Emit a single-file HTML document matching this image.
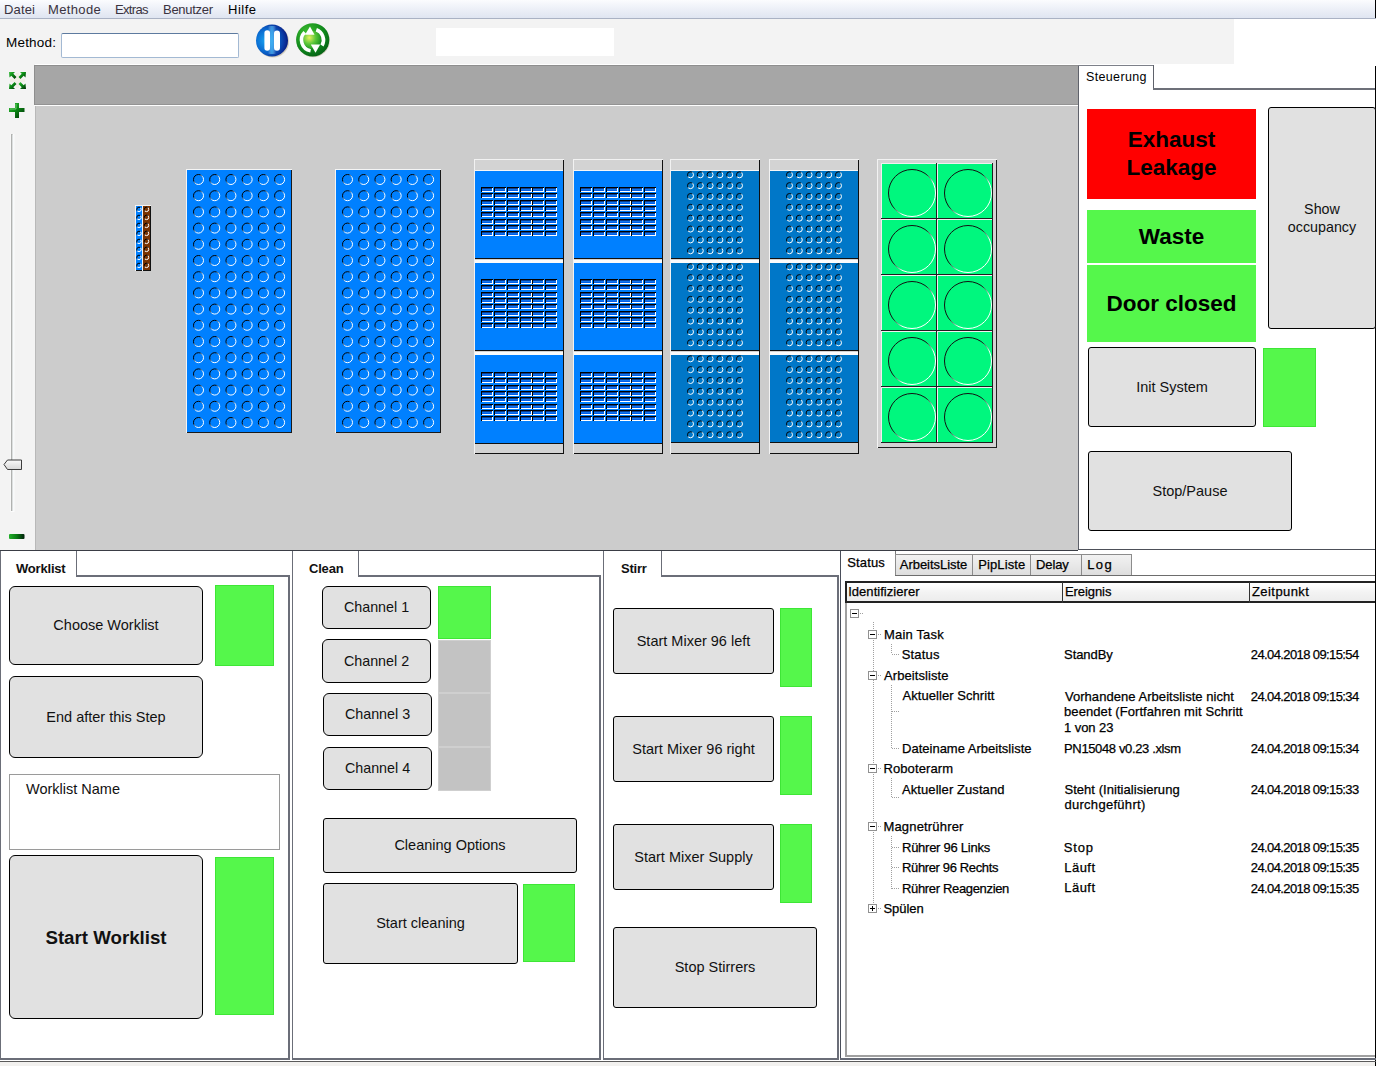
<!DOCTYPE html>
<html><head><meta charset="utf-8">
<style>
*{margin:0;padding:0;box-sizing:border-box}
html,body{width:1376px;height:1066px;overflow:hidden;background:#fff}
body{position:relative;font-family:"Liberation Sans",sans-serif;color:#000}
.a{position:absolute}
.btn{position:absolute;background:#e1e1e1;border:1px solid #000;border-radius:3px;display:flex;align-items:center;justify-content:center;font-size:14px;color:#111;text-align:center;line-height:17px}
.r5{border-radius:6px}
.g{position:absolute;background:#55f74b;border:1px solid #3ee636}
.gr{position:absolute;background:#c3c3c3;border:1px solid #cfcfcf}
.hl{position:absolute;height:1px;background:#6b6e78}
.vl{position:absolute;width:1px;background:#6b6e78}
.menu span{position:absolute;top:2px;font-size:13px;color:#3a3340}
.tt{position:absolute;font-size:12.5px;color:#111;white-space:nowrap}
</style></head><body>

<!-- MENUBAR -->
<div class="a menu" style="left:0;top:0;width:1376px;height:18px;background:linear-gradient(#fbfcfe 0%,#eef1f8 45%,#dfe5f1 100%)">
 <span style="left:4px;letter-spacing:0.15px">Datei</span>
 <span style="left:48px;letter-spacing:0.35px">Methode</span>
 <span style="left:115px;letter-spacing:-0.65px">Extras</span>
 <span style="left:163px;letter-spacing:-0.28px">Benutzer</span>
 <span style="left:228px;color:#000;letter-spacing:0.5px">Hilfe</span>
</div>
<div class="a" style="left:0;top:18px;width:1376px;height:1px;background:#aab2c4"></div>
<div class="a" style="left:1375px;top:0;width:1px;height:18px;background:#000"></div>

<!-- TOOLBAR -->
<div class="a" style="left:0;top:19px;width:1234px;height:45px;background:#f3f3f3"></div>
<div class="a" style="left:6px;top:35px;font-size:13.5px;color:#000;letter-spacing:0.2px">Method:</div>
<div class="a" style="left:61px;top:33px;width:178px;height:25px;background:#fff;border:1px solid #a3b9d3;border-top-color:#5d7a9f;border-radius:2px"></div>
<div class="a" style="left:436px;top:28px;width:178px;height:28px;background:#fff"></div>

<!-- pause icon -->
<svg class="a" style="left:254px;top:22px" width="38" height="38" viewBox="0 0 38 38">
 <defs>
  <radialGradient id="pb" cx="0.32" cy="0.5" r="0.75"><stop offset="0" stop-color="#1aa6f2"/><stop offset="0.45" stop-color="#0a6ad0"/><stop offset="0.8" stop-color="#0a2f98"/><stop offset="1" stop-color="#060d60"/></radialGradient>
  <linearGradient id="pbc" x1="0" y1="0" x2="1" y2="0"><stop offset="0" stop-color="#fff" stop-opacity="0"/><stop offset="0.5" stop-color="#52c8ff" stop-opacity="0.6"/><stop offset="1" stop-color="#fff" stop-opacity="0"/></linearGradient>
 </defs>
 <circle cx="19" cy="19.5" r="16" fill="#b8ae90" opacity="0.55"/>
 <circle cx="18" cy="18.5" r="16" fill="url(#pb)"/>
 <rect x="14" y="4" width="8" height="28" fill="url(#pbc)"/>
 <rect x="10.4" y="8.2" width="5.6" height="20.6" rx="2.8" fill="#fff"/>
 <rect x="20" y="8.6" width="6" height="20.2" rx="3" fill="#fff"/>
</svg>
<!-- refresh icon -->
<svg class="a" style="left:294px;top:21px" width="38" height="38" viewBox="0 0 38 38">
 <defs>
  <radialGradient id="rb" cx="0.35" cy="0.3" r="0.8"><stop offset="0" stop-color="#40c030"/><stop offset="0.6" stop-color="#108a1c"/><stop offset="1" stop-color="#035a14"/></radialGradient>
  <radialGradient id="rc" cx="0.35" cy="0.4" r="0.7"><stop offset="0" stop-color="#e6f060"/><stop offset="0.5" stop-color="#5cc83a"/><stop offset="1" stop-color="#18921c"/></radialGradient>
 </defs>
 <circle cx="19.2" cy="19.6" r="16.6" fill="#b8ae90" opacity="0.55"/>
 <circle cx="18.7" cy="18.8" r="16.6" fill="url(#rb)"/>
 <circle cx="18" cy="18.5" r="9" fill="url(#rc)"/>
 <path d="M10.7 11.2 A11 11 0 0 0 16.6 29.8" stroke="#fff" stroke-width="3.6" fill="none"/>
 <path d="M22.3 8.7 A11 11 0 0 1 28 24.5" stroke="#fff" stroke-width="3.6" fill="none"/>
 <path d="M16 5.5 L11 13.8 L20.5 13.8 Z" fill="#fff"/>
 <path d="M21.5 31.8 L16.8 23.6 L26.2 23.6 Z" fill="#fff"/>
</svg>

<!-- LEFT ZOOM STRIP -->
<div class="a" style="left:0;top:64px;width:35px;height:486px;background:#f3f3f3"></div>
<svg class="a" style="left:0;top:64px" width="34" height="486" viewBox="0 64 34 486">
 <defs>
  <linearGradient id="gp" x1="0" y1="0" x2="1" y2="1"><stop offset="0" stop-color="#3cc040"/><stop offset="0.45" stop-color="#0a8a14"/><stop offset="1" stop-color="#002a06"/></linearGradient>
  <linearGradient id="gm" x1="0" y1="0" x2="1" y2="0"><stop offset="0" stop-color="#22b02a"/><stop offset="0.5" stop-color="#0a7a14"/><stop offset="1" stop-color="#00200a"/></linearGradient>
 </defs>
 <g fill="#efeadb" opacity="0.55"><rect x="16" y="73" width="3" height="15"/><rect x="10" y="79" width="15" height="3"/><circle cx="17.5" cy="80.5" r="3"/></g>
 <g fill="url(#gp)" stroke="#fff" stroke-width="0.6" stroke-opacity="0.7" paint-order="stroke">
  <path d="M9 72 H15 L13.3 73.8 L16.5 77 L14.5 79 L11.3 75.8 L9.5 77.6 Z"/>
  <path d="M26 72 H20 L21.7 73.8 L18.5 77 L20.5 79 L23.7 75.8 L25.5 77.6 Z"/>
  <path d="M9 89 H15 L13.3 87.2 L16.5 84 L14.5 82 L11.3 85.2 L9.5 83.4 Z"/>
  <path d="M26 89 H20 L21.7 87.2 L18.5 84 L20.5 82 L23.7 85.2 L25.5 83.4 Z"/>
 </g>
 <path d="M15 103 H19 V108 H24.5 V112 H19 V118 H15 V112 H9 V108 H15 Z" fill="url(#gp)"/>
 <path d="M16 104 V109 H10" stroke="#9be89a" stroke-width="0.8" fill="none" opacity="0.8"/>
 <rect x="10.5" y="134" width="4" height="378" fill="#fff" opacity="0.7"/>
 <rect x="11" y="134" width="1.6" height="377" fill="#b0b2b0"/>
 <rect x="12.6" y="135" width="1" height="376" fill="#f4f8fa"/>
 <defs><linearGradient id="gt" x1="0" y1="0" x2="0" y2="1"><stop offset="0" stop-color="#fafafa"/><stop offset="1" stop-color="#d8d8d8"/></linearGradient></defs>
 <path d="M4 464.5 L7.5 460 H21.5 V469.5 H7.5 Z" fill="url(#gt)" stroke="#3c3c3c" stroke-width="1"/>
 <rect x="9" y="534" width="15.5" height="5" rx="1" fill="url(#gm)"/>
</svg>

<!-- DECK -->
<div class="a" style="left:34px;top:65px;width:1044px;height:40px;background:#a6a6a6;border-top:1px solid #8e8e8e;border-left:1px solid #8e8e8e"></div>
<div class="a" style="left:35px;top:104px;width:1043px;height:1px;background:#939393"></div>
<div class="a" style="left:34px;top:105px;width:1044px;height:1px;background:#fdfdfd"></div>
<div class="a" style="left:35px;top:106px;width:1043px;height:444px;background:#cccccc;border-left:1px solid #b8b8b8"></div>
<svg width="0" height="0" style="position:absolute"><defs>
<linearGradient id="wellg" x1="0" y1="0" x2="1" y2="1"><stop offset="0.3" stop-color="#000"/><stop offset="0.6" stop-color="#fff"/></linearGradient>
<linearGradient id="wellg2" x1="0" y1="0" x2="1" y2="1"><stop offset="0.35" stop-color="#000"/><stop offset="0.55" stop-color="#fff"/></linearGradient>
<linearGradient id="resg" x1="0" y1="0" x2="1" y2="1"><stop offset="0.45" stop-color="#111"/><stop offset="0.62" stop-color="#fff"/></linearGradient>
<linearGradient id="tubeg" x1="0" y1="0" x2="0" y2="1"><stop offset="0" stop-color="#1e9bff"/><stop offset="1" stop-color="#0050e0"/></linearGradient>
</defs></svg><svg class="a" style="left:135px;top:205px" width="8" height="66"><rect x="0" y="0" width="8" height="66" fill="#f4f4f4"/><rect x="1" y="1" width="7" height="65" fill="#111"/><rect x="1" y="1" width="6" height="64" fill="#0080ff"/><g fill="none" stroke="url(#wellg2)" stroke-width="1"><circle cx="4" cy="4.4" r="2.2"/><circle cx="4" cy="12.4" r="2.2"/><circle cx="4" cy="20.4" r="2.2"/><circle cx="4" cy="28.4" r="2.2"/><circle cx="4" cy="36.4" r="2.2"/><circle cx="4" cy="44.4" r="2.2"/><circle cx="4" cy="52.4" r="2.2"/><circle cx="4" cy="60.4" r="2.2"/></g></svg><svg class="a" style="left:142px;top:205px" width="9" height="66"><rect x="0" y="0" width="9" height="66" fill="#f4f4f4"/><rect x="1" y="1" width="8" height="65" fill="#111"/><rect x="1" y="1" width="7" height="64" fill="#7a3300"/><g fill="none" stroke="url(#wellg2)" stroke-width="1"><circle cx="4.5" cy="4.4" r="2.2"/><circle cx="4.5" cy="12.4" r="2.2"/><circle cx="4.5" cy="20.4" r="2.2"/><circle cx="4.5" cy="28.4" r="2.2"/><circle cx="4.5" cy="36.4" r="2.2"/><circle cx="4.5" cy="44.4" r="2.2"/><circle cx="4.5" cy="52.4" r="2.2"/><circle cx="4.5" cy="60.4" r="2.2"/></g></svg><svg class="a" style="left:186px;top:169px" width="106" height="264"><rect x="0" y="0" width="106" height="264" fill="#f4f4f4"/><rect x="1" y="1" width="105" height="263" fill="#1a1a1a"/><rect x="1" y="1" width="104" height="262" fill="#0080ff"/><g fill="none" stroke="url(#wellg)" stroke-width="1"><circle cx="12.5" cy="10.5" r="5"/><circle cx="28.72" cy="10.5" r="5"/><circle cx="44.94" cy="10.5" r="5"/><circle cx="61.16" cy="10.5" r="5"/><circle cx="77.38" cy="10.5" r="5"/><circle cx="93.6" cy="10.5" r="5"/><circle cx="12.5" cy="26.7" r="5"/><circle cx="28.72" cy="26.7" r="5"/><circle cx="44.94" cy="26.7" r="5"/><circle cx="61.16" cy="26.7" r="5"/><circle cx="77.38" cy="26.7" r="5"/><circle cx="93.6" cy="26.7" r="5"/><circle cx="12.5" cy="42.9" r="5"/><circle cx="28.72" cy="42.9" r="5"/><circle cx="44.94" cy="42.9" r="5"/><circle cx="61.16" cy="42.9" r="5"/><circle cx="77.38" cy="42.9" r="5"/><circle cx="93.6" cy="42.9" r="5"/><circle cx="12.5" cy="59.1" r="5"/><circle cx="28.72" cy="59.1" r="5"/><circle cx="44.94" cy="59.1" r="5"/><circle cx="61.16" cy="59.1" r="5"/><circle cx="77.38" cy="59.1" r="5"/><circle cx="93.6" cy="59.1" r="5"/><circle cx="12.5" cy="75.3" r="5"/><circle cx="28.72" cy="75.3" r="5"/><circle cx="44.94" cy="75.3" r="5"/><circle cx="61.16" cy="75.3" r="5"/><circle cx="77.38" cy="75.3" r="5"/><circle cx="93.6" cy="75.3" r="5"/><circle cx="12.5" cy="91.5" r="5"/><circle cx="28.72" cy="91.5" r="5"/><circle cx="44.94" cy="91.5" r="5"/><circle cx="61.16" cy="91.5" r="5"/><circle cx="77.38" cy="91.5" r="5"/><circle cx="93.6" cy="91.5" r="5"/><circle cx="12.5" cy="107.7" r="5"/><circle cx="28.72" cy="107.7" r="5"/><circle cx="44.94" cy="107.7" r="5"/><circle cx="61.16" cy="107.7" r="5"/><circle cx="77.38" cy="107.7" r="5"/><circle cx="93.6" cy="107.7" r="5"/><circle cx="12.5" cy="123.9" r="5"/><circle cx="28.72" cy="123.9" r="5"/><circle cx="44.94" cy="123.9" r="5"/><circle cx="61.16" cy="123.9" r="5"/><circle cx="77.38" cy="123.9" r="5"/><circle cx="93.6" cy="123.9" r="5"/><circle cx="12.5" cy="140.1" r="5"/><circle cx="28.72" cy="140.1" r="5"/><circle cx="44.94" cy="140.1" r="5"/><circle cx="61.16" cy="140.1" r="5"/><circle cx="77.38" cy="140.1" r="5"/><circle cx="93.6" cy="140.1" r="5"/><circle cx="12.5" cy="156.3" r="5"/><circle cx="28.72" cy="156.3" r="5"/><circle cx="44.94" cy="156.3" r="5"/><circle cx="61.16" cy="156.3" r="5"/><circle cx="77.38" cy="156.3" r="5"/><circle cx="93.6" cy="156.3" r="5"/><circle cx="12.5" cy="172.5" r="5"/><circle cx="28.72" cy="172.5" r="5"/><circle cx="44.94" cy="172.5" r="5"/><circle cx="61.16" cy="172.5" r="5"/><circle cx="77.38" cy="172.5" r="5"/><circle cx="93.6" cy="172.5" r="5"/><circle cx="12.5" cy="188.7" r="5"/><circle cx="28.72" cy="188.7" r="5"/><circle cx="44.94" cy="188.7" r="5"/><circle cx="61.16" cy="188.7" r="5"/><circle cx="77.38" cy="188.7" r="5"/><circle cx="93.6" cy="188.7" r="5"/><circle cx="12.5" cy="204.9" r="5"/><circle cx="28.72" cy="204.9" r="5"/><circle cx="44.94" cy="204.9" r="5"/><circle cx="61.16" cy="204.9" r="5"/><circle cx="77.38" cy="204.9" r="5"/><circle cx="93.6" cy="204.9" r="5"/><circle cx="12.5" cy="221.1" r="5"/><circle cx="28.72" cy="221.1" r="5"/><circle cx="44.94" cy="221.1" r="5"/><circle cx="61.16" cy="221.1" r="5"/><circle cx="77.38" cy="221.1" r="5"/><circle cx="93.6" cy="221.1" r="5"/><circle cx="12.5" cy="237.3" r="5"/><circle cx="28.72" cy="237.3" r="5"/><circle cx="44.94" cy="237.3" r="5"/><circle cx="61.16" cy="237.3" r="5"/><circle cx="77.38" cy="237.3" r="5"/><circle cx="93.6" cy="237.3" r="5"/><circle cx="12.5" cy="253.5" r="5"/><circle cx="28.72" cy="253.5" r="5"/><circle cx="44.94" cy="253.5" r="5"/><circle cx="61.16" cy="253.5" r="5"/><circle cx="77.38" cy="253.5" r="5"/><circle cx="93.6" cy="253.5" r="5"/></g></svg><svg class="a" style="left:335px;top:169px" width="106" height="264"><rect x="0" y="0" width="106" height="264" fill="#f4f4f4"/><rect x="1" y="1" width="105" height="263" fill="#1a1a1a"/><rect x="1" y="1" width="104" height="262" fill="#0080ff"/><g fill="none" stroke="url(#wellg)" stroke-width="1"><circle cx="12.5" cy="10.5" r="5"/><circle cx="28.72" cy="10.5" r="5"/><circle cx="44.94" cy="10.5" r="5"/><circle cx="61.16" cy="10.5" r="5"/><circle cx="77.38" cy="10.5" r="5"/><circle cx="93.6" cy="10.5" r="5"/><circle cx="12.5" cy="26.7" r="5"/><circle cx="28.72" cy="26.7" r="5"/><circle cx="44.94" cy="26.7" r="5"/><circle cx="61.16" cy="26.7" r="5"/><circle cx="77.38" cy="26.7" r="5"/><circle cx="93.6" cy="26.7" r="5"/><circle cx="12.5" cy="42.9" r="5"/><circle cx="28.72" cy="42.9" r="5"/><circle cx="44.94" cy="42.9" r="5"/><circle cx="61.16" cy="42.9" r="5"/><circle cx="77.38" cy="42.9" r="5"/><circle cx="93.6" cy="42.9" r="5"/><circle cx="12.5" cy="59.1" r="5"/><circle cx="28.72" cy="59.1" r="5"/><circle cx="44.94" cy="59.1" r="5"/><circle cx="61.16" cy="59.1" r="5"/><circle cx="77.38" cy="59.1" r="5"/><circle cx="93.6" cy="59.1" r="5"/><circle cx="12.5" cy="75.3" r="5"/><circle cx="28.72" cy="75.3" r="5"/><circle cx="44.94" cy="75.3" r="5"/><circle cx="61.16" cy="75.3" r="5"/><circle cx="77.38" cy="75.3" r="5"/><circle cx="93.6" cy="75.3" r="5"/><circle cx="12.5" cy="91.5" r="5"/><circle cx="28.72" cy="91.5" r="5"/><circle cx="44.94" cy="91.5" r="5"/><circle cx="61.16" cy="91.5" r="5"/><circle cx="77.38" cy="91.5" r="5"/><circle cx="93.6" cy="91.5" r="5"/><circle cx="12.5" cy="107.7" r="5"/><circle cx="28.72" cy="107.7" r="5"/><circle cx="44.94" cy="107.7" r="5"/><circle cx="61.16" cy="107.7" r="5"/><circle cx="77.38" cy="107.7" r="5"/><circle cx="93.6" cy="107.7" r="5"/><circle cx="12.5" cy="123.9" r="5"/><circle cx="28.72" cy="123.9" r="5"/><circle cx="44.94" cy="123.9" r="5"/><circle cx="61.16" cy="123.9" r="5"/><circle cx="77.38" cy="123.9" r="5"/><circle cx="93.6" cy="123.9" r="5"/><circle cx="12.5" cy="140.1" r="5"/><circle cx="28.72" cy="140.1" r="5"/><circle cx="44.94" cy="140.1" r="5"/><circle cx="61.16" cy="140.1" r="5"/><circle cx="77.38" cy="140.1" r="5"/><circle cx="93.6" cy="140.1" r="5"/><circle cx="12.5" cy="156.3" r="5"/><circle cx="28.72" cy="156.3" r="5"/><circle cx="44.94" cy="156.3" r="5"/><circle cx="61.16" cy="156.3" r="5"/><circle cx="77.38" cy="156.3" r="5"/><circle cx="93.6" cy="156.3" r="5"/><circle cx="12.5" cy="172.5" r="5"/><circle cx="28.72" cy="172.5" r="5"/><circle cx="44.94" cy="172.5" r="5"/><circle cx="61.16" cy="172.5" r="5"/><circle cx="77.38" cy="172.5" r="5"/><circle cx="93.6" cy="172.5" r="5"/><circle cx="12.5" cy="188.7" r="5"/><circle cx="28.72" cy="188.7" r="5"/><circle cx="44.94" cy="188.7" r="5"/><circle cx="61.16" cy="188.7" r="5"/><circle cx="77.38" cy="188.7" r="5"/><circle cx="93.6" cy="188.7" r="5"/><circle cx="12.5" cy="204.9" r="5"/><circle cx="28.72" cy="204.9" r="5"/><circle cx="44.94" cy="204.9" r="5"/><circle cx="61.16" cy="204.9" r="5"/><circle cx="77.38" cy="204.9" r="5"/><circle cx="93.6" cy="204.9" r="5"/><circle cx="12.5" cy="221.1" r="5"/><circle cx="28.72" cy="221.1" r="5"/><circle cx="44.94" cy="221.1" r="5"/><circle cx="61.16" cy="221.1" r="5"/><circle cx="77.38" cy="221.1" r="5"/><circle cx="93.6" cy="221.1" r="5"/><circle cx="12.5" cy="237.3" r="5"/><circle cx="28.72" cy="237.3" r="5"/><circle cx="44.94" cy="237.3" r="5"/><circle cx="61.16" cy="237.3" r="5"/><circle cx="77.38" cy="237.3" r="5"/><circle cx="93.6" cy="237.3" r="5"/><circle cx="12.5" cy="253.5" r="5"/><circle cx="28.72" cy="253.5" r="5"/><circle cx="44.94" cy="253.5" r="5"/><circle cx="61.16" cy="253.5" r="5"/><circle cx="77.38" cy="253.5" r="5"/><circle cx="93.6" cy="253.5" r="5"/></g></svg><svg class="a" style="left:474px;top:159px" width="90" height="295"><rect x="0" y="0" width="90" height="295" fill="#f2f2f2"/><rect x="1" y="1" width="89" height="294" fill="#101010"/><rect x="1" y="1" width="88" height="293" fill="#d3d3d3"/><rect x="1" y="11" width="88" height="1" fill="#f6f6f6"/><rect x="1" y="12" width="89" height="88" fill="#101010"/><rect x="1" y="12" width="88" height="87" fill="#0080ff"/><rect x="7" y="28" width="12" height="5" fill="#000"/><rect x="8" y="29" width="11" height="4" fill="#fff"/><rect x="8" y="29" width="10" height="3" fill="url(#tubeg)"/><rect x="8" y="29" width="10" height="1" fill="#0a3c90"/><rect x="20" y="28" width="12" height="5" fill="#000"/><rect x="21" y="29" width="11" height="4" fill="#fff"/><rect x="21" y="29" width="10" height="3" fill="url(#tubeg)"/><rect x="21" y="29" width="10" height="1" fill="#0a3c90"/><rect x="33" y="28" width="12" height="5" fill="#000"/><rect x="34" y="29" width="11" height="4" fill="#fff"/><rect x="34" y="29" width="10" height="3" fill="url(#tubeg)"/><rect x="34" y="29" width="10" height="1" fill="#0a3c90"/><rect x="46" y="28" width="12" height="5" fill="#000"/><rect x="47" y="29" width="11" height="4" fill="#fff"/><rect x="47" y="29" width="10" height="3" fill="url(#tubeg)"/><rect x="47" y="29" width="10" height="1" fill="#0a3c90"/><rect x="58" y="28" width="12" height="5" fill="#000"/><rect x="59" y="29" width="11" height="4" fill="#fff"/><rect x="59" y="29" width="10" height="3" fill="url(#tubeg)"/><rect x="59" y="29" width="10" height="1" fill="#0a3c90"/><rect x="71" y="28" width="12" height="5" fill="#000"/><rect x="72" y="29" width="11" height="4" fill="#fff"/><rect x="72" y="29" width="10" height="3" fill="url(#tubeg)"/><rect x="72" y="29" width="10" height="1" fill="#0a3c90"/><rect x="7" y="34" width="12" height="5" fill="#000"/><rect x="8" y="35" width="11" height="4" fill="#fff"/><rect x="8" y="35" width="10" height="3" fill="url(#tubeg)"/><rect x="8" y="35" width="10" height="1" fill="#0a3c90"/><rect x="20" y="34" width="12" height="5" fill="#000"/><rect x="21" y="35" width="11" height="4" fill="#fff"/><rect x="21" y="35" width="10" height="3" fill="url(#tubeg)"/><rect x="21" y="35" width="10" height="1" fill="#0a3c90"/><rect x="33" y="34" width="12" height="5" fill="#000"/><rect x="34" y="35" width="11" height="4" fill="#fff"/><rect x="34" y="35" width="10" height="3" fill="url(#tubeg)"/><rect x="34" y="35" width="10" height="1" fill="#0a3c90"/><rect x="46" y="34" width="12" height="5" fill="#000"/><rect x="47" y="35" width="11" height="4" fill="#fff"/><rect x="47" y="35" width="10" height="3" fill="url(#tubeg)"/><rect x="47" y="35" width="10" height="1" fill="#0a3c90"/><rect x="58" y="34" width="12" height="5" fill="#000"/><rect x="59" y="35" width="11" height="4" fill="#fff"/><rect x="59" y="35" width="10" height="3" fill="url(#tubeg)"/><rect x="59" y="35" width="10" height="1" fill="#0a3c90"/><rect x="71" y="34" width="12" height="5" fill="#000"/><rect x="72" y="35" width="11" height="4" fill="#fff"/><rect x="72" y="35" width="10" height="3" fill="url(#tubeg)"/><rect x="72" y="35" width="10" height="1" fill="#0a3c90"/><rect x="7" y="41" width="12" height="5" fill="#000"/><rect x="8" y="42" width="11" height="4" fill="#fff"/><rect x="8" y="42" width="10" height="3" fill="url(#tubeg)"/><rect x="8" y="42" width="10" height="1" fill="#0a3c90"/><rect x="20" y="41" width="12" height="5" fill="#000"/><rect x="21" y="42" width="11" height="4" fill="#fff"/><rect x="21" y="42" width="10" height="3" fill="url(#tubeg)"/><rect x="21" y="42" width="10" height="1" fill="#0a3c90"/><rect x="33" y="41" width="12" height="5" fill="#000"/><rect x="34" y="42" width="11" height="4" fill="#fff"/><rect x="34" y="42" width="10" height="3" fill="url(#tubeg)"/><rect x="34" y="42" width="10" height="1" fill="#0a3c90"/><rect x="46" y="41" width="12" height="5" fill="#000"/><rect x="47" y="42" width="11" height="4" fill="#fff"/><rect x="47" y="42" width="10" height="3" fill="url(#tubeg)"/><rect x="47" y="42" width="10" height="1" fill="#0a3c90"/><rect x="58" y="41" width="12" height="5" fill="#000"/><rect x="59" y="42" width="11" height="4" fill="#fff"/><rect x="59" y="42" width="10" height="3" fill="url(#tubeg)"/><rect x="59" y="42" width="10" height="1" fill="#0a3c90"/><rect x="71" y="41" width="12" height="5" fill="#000"/><rect x="72" y="42" width="11" height="4" fill="#fff"/><rect x="72" y="42" width="10" height="3" fill="url(#tubeg)"/><rect x="72" y="42" width="10" height="1" fill="#0a3c90"/><rect x="7" y="47" width="12" height="5" fill="#000"/><rect x="8" y="48" width="11" height="4" fill="#fff"/><rect x="8" y="48" width="10" height="3" fill="url(#tubeg)"/><rect x="8" y="48" width="10" height="1" fill="#0a3c90"/><rect x="20" y="47" width="12" height="5" fill="#000"/><rect x="21" y="48" width="11" height="4" fill="#fff"/><rect x="21" y="48" width="10" height="3" fill="url(#tubeg)"/><rect x="21" y="48" width="10" height="1" fill="#0a3c90"/><rect x="33" y="47" width="12" height="5" fill="#000"/><rect x="34" y="48" width="11" height="4" fill="#fff"/><rect x="34" y="48" width="10" height="3" fill="url(#tubeg)"/><rect x="34" y="48" width="10" height="1" fill="#0a3c90"/><rect x="46" y="47" width="12" height="5" fill="#000"/><rect x="47" y="48" width="11" height="4" fill="#fff"/><rect x="47" y="48" width="10" height="3" fill="url(#tubeg)"/><rect x="47" y="48" width="10" height="1" fill="#0a3c90"/><rect x="58" y="47" width="12" height="5" fill="#000"/><rect x="59" y="48" width="11" height="4" fill="#fff"/><rect x="59" y="48" width="10" height="3" fill="url(#tubeg)"/><rect x="59" y="48" width="10" height="1" fill="#0a3c90"/><rect x="71" y="47" width="12" height="5" fill="#000"/><rect x="72" y="48" width="11" height="4" fill="#fff"/><rect x="72" y="48" width="10" height="3" fill="url(#tubeg)"/><rect x="72" y="48" width="10" height="1" fill="#0a3c90"/><rect x="7" y="53" width="12" height="5" fill="#000"/><rect x="8" y="54" width="11" height="4" fill="#fff"/><rect x="8" y="54" width="10" height="3" fill="url(#tubeg)"/><rect x="8" y="54" width="10" height="1" fill="#0a3c90"/><rect x="20" y="53" width="12" height="5" fill="#000"/><rect x="21" y="54" width="11" height="4" fill="#fff"/><rect x="21" y="54" width="10" height="3" fill="url(#tubeg)"/><rect x="21" y="54" width="10" height="1" fill="#0a3c90"/><rect x="33" y="53" width="12" height="5" fill="#000"/><rect x="34" y="54" width="11" height="4" fill="#fff"/><rect x="34" y="54" width="10" height="3" fill="url(#tubeg)"/><rect x="34" y="54" width="10" height="1" fill="#0a3c90"/><rect x="46" y="53" width="12" height="5" fill="#000"/><rect x="47" y="54" width="11" height="4" fill="#fff"/><rect x="47" y="54" width="10" height="3" fill="url(#tubeg)"/><rect x="47" y="54" width="10" height="1" fill="#0a3c90"/><rect x="58" y="53" width="12" height="5" fill="#000"/><rect x="59" y="54" width="11" height="4" fill="#fff"/><rect x="59" y="54" width="10" height="3" fill="url(#tubeg)"/><rect x="59" y="54" width="10" height="1" fill="#0a3c90"/><rect x="71" y="53" width="12" height="5" fill="#000"/><rect x="72" y="54" width="11" height="4" fill="#fff"/><rect x="72" y="54" width="10" height="3" fill="url(#tubeg)"/><rect x="72" y="54" width="10" height="1" fill="#0a3c90"/><rect x="7" y="60" width="12" height="5" fill="#000"/><rect x="8" y="61" width="11" height="4" fill="#fff"/><rect x="8" y="61" width="10" height="3" fill="url(#tubeg)"/><rect x="8" y="61" width="10" height="1" fill="#0a3c90"/><rect x="20" y="60" width="12" height="5" fill="#000"/><rect x="21" y="61" width="11" height="4" fill="#fff"/><rect x="21" y="61" width="10" height="3" fill="url(#tubeg)"/><rect x="21" y="61" width="10" height="1" fill="#0a3c90"/><rect x="33" y="60" width="12" height="5" fill="#000"/><rect x="34" y="61" width="11" height="4" fill="#fff"/><rect x="34" y="61" width="10" height="3" fill="url(#tubeg)"/><rect x="34" y="61" width="10" height="1" fill="#0a3c90"/><rect x="46" y="60" width="12" height="5" fill="#000"/><rect x="47" y="61" width="11" height="4" fill="#fff"/><rect x="47" y="61" width="10" height="3" fill="url(#tubeg)"/><rect x="47" y="61" width="10" height="1" fill="#0a3c90"/><rect x="58" y="60" width="12" height="5" fill="#000"/><rect x="59" y="61" width="11" height="4" fill="#fff"/><rect x="59" y="61" width="10" height="3" fill="url(#tubeg)"/><rect x="59" y="61" width="10" height="1" fill="#0a3c90"/><rect x="71" y="60" width="12" height="5" fill="#000"/><rect x="72" y="61" width="11" height="4" fill="#fff"/><rect x="72" y="61" width="10" height="3" fill="url(#tubeg)"/><rect x="72" y="61" width="10" height="1" fill="#0a3c90"/><rect x="7" y="66" width="12" height="5" fill="#000"/><rect x="8" y="67" width="11" height="4" fill="#fff"/><rect x="8" y="67" width="10" height="3" fill="url(#tubeg)"/><rect x="8" y="67" width="10" height="1" fill="#0a3c90"/><rect x="20" y="66" width="12" height="5" fill="#000"/><rect x="21" y="67" width="11" height="4" fill="#fff"/><rect x="21" y="67" width="10" height="3" fill="url(#tubeg)"/><rect x="21" y="67" width="10" height="1" fill="#0a3c90"/><rect x="33" y="66" width="12" height="5" fill="#000"/><rect x="34" y="67" width="11" height="4" fill="#fff"/><rect x="34" y="67" width="10" height="3" fill="url(#tubeg)"/><rect x="34" y="67" width="10" height="1" fill="#0a3c90"/><rect x="46" y="66" width="12" height="5" fill="#000"/><rect x="47" y="67" width="11" height="4" fill="#fff"/><rect x="47" y="67" width="10" height="3" fill="url(#tubeg)"/><rect x="47" y="67" width="10" height="1" fill="#0a3c90"/><rect x="58" y="66" width="12" height="5" fill="#000"/><rect x="59" y="67" width="11" height="4" fill="#fff"/><rect x="59" y="67" width="10" height="3" fill="url(#tubeg)"/><rect x="59" y="67" width="10" height="1" fill="#0a3c90"/><rect x="71" y="66" width="12" height="5" fill="#000"/><rect x="72" y="67" width="11" height="4" fill="#fff"/><rect x="72" y="67" width="10" height="3" fill="url(#tubeg)"/><rect x="72" y="67" width="10" height="1" fill="#0a3c90"/><rect x="7" y="72" width="12" height="5" fill="#000"/><rect x="8" y="73" width="11" height="4" fill="#fff"/><rect x="8" y="73" width="10" height="3" fill="url(#tubeg)"/><rect x="8" y="73" width="10" height="1" fill="#0a3c90"/><rect x="20" y="72" width="12" height="5" fill="#000"/><rect x="21" y="73" width="11" height="4" fill="#fff"/><rect x="21" y="73" width="10" height="3" fill="url(#tubeg)"/><rect x="21" y="73" width="10" height="1" fill="#0a3c90"/><rect x="33" y="72" width="12" height="5" fill="#000"/><rect x="34" y="73" width="11" height="4" fill="#fff"/><rect x="34" y="73" width="10" height="3" fill="url(#tubeg)"/><rect x="34" y="73" width="10" height="1" fill="#0a3c90"/><rect x="46" y="72" width="12" height="5" fill="#000"/><rect x="47" y="73" width="11" height="4" fill="#fff"/><rect x="47" y="73" width="10" height="3" fill="url(#tubeg)"/><rect x="47" y="73" width="10" height="1" fill="#0a3c90"/><rect x="58" y="72" width="12" height="5" fill="#000"/><rect x="59" y="73" width="11" height="4" fill="#fff"/><rect x="59" y="73" width="10" height="3" fill="url(#tubeg)"/><rect x="59" y="73" width="10" height="1" fill="#0a3c90"/><rect x="71" y="72" width="12" height="5" fill="#000"/><rect x="72" y="73" width="11" height="4" fill="#fff"/><rect x="72" y="73" width="10" height="3" fill="url(#tubeg)"/><rect x="72" y="73" width="10" height="1" fill="#0a3c90"/><rect x="1" y="101" width="88" height="3" fill="#fbfbfb"/><rect x="1" y="104" width="89" height="88" fill="#101010"/><rect x="1" y="104" width="88" height="87" fill="#0080ff"/><rect x="7" y="120" width="12" height="5" fill="#000"/><rect x="8" y="121" width="11" height="4" fill="#fff"/><rect x="8" y="121" width="10" height="3" fill="url(#tubeg)"/><rect x="8" y="121" width="10" height="1" fill="#0a3c90"/><rect x="20" y="120" width="12" height="5" fill="#000"/><rect x="21" y="121" width="11" height="4" fill="#fff"/><rect x="21" y="121" width="10" height="3" fill="url(#tubeg)"/><rect x="21" y="121" width="10" height="1" fill="#0a3c90"/><rect x="33" y="120" width="12" height="5" fill="#000"/><rect x="34" y="121" width="11" height="4" fill="#fff"/><rect x="34" y="121" width="10" height="3" fill="url(#tubeg)"/><rect x="34" y="121" width="10" height="1" fill="#0a3c90"/><rect x="46" y="120" width="12" height="5" fill="#000"/><rect x="47" y="121" width="11" height="4" fill="#fff"/><rect x="47" y="121" width="10" height="3" fill="url(#tubeg)"/><rect x="47" y="121" width="10" height="1" fill="#0a3c90"/><rect x="58" y="120" width="12" height="5" fill="#000"/><rect x="59" y="121" width="11" height="4" fill="#fff"/><rect x="59" y="121" width="10" height="3" fill="url(#tubeg)"/><rect x="59" y="121" width="10" height="1" fill="#0a3c90"/><rect x="71" y="120" width="12" height="5" fill="#000"/><rect x="72" y="121" width="11" height="4" fill="#fff"/><rect x="72" y="121" width="10" height="3" fill="url(#tubeg)"/><rect x="72" y="121" width="10" height="1" fill="#0a3c90"/><rect x="7" y="126" width="12" height="5" fill="#000"/><rect x="8" y="127" width="11" height="4" fill="#fff"/><rect x="8" y="127" width="10" height="3" fill="url(#tubeg)"/><rect x="8" y="127" width="10" height="1" fill="#0a3c90"/><rect x="20" y="126" width="12" height="5" fill="#000"/><rect x="21" y="127" width="11" height="4" fill="#fff"/><rect x="21" y="127" width="10" height="3" fill="url(#tubeg)"/><rect x="21" y="127" width="10" height="1" fill="#0a3c90"/><rect x="33" y="126" width="12" height="5" fill="#000"/><rect x="34" y="127" width="11" height="4" fill="#fff"/><rect x="34" y="127" width="10" height="3" fill="url(#tubeg)"/><rect x="34" y="127" width="10" height="1" fill="#0a3c90"/><rect x="46" y="126" width="12" height="5" fill="#000"/><rect x="47" y="127" width="11" height="4" fill="#fff"/><rect x="47" y="127" width="10" height="3" fill="url(#tubeg)"/><rect x="47" y="127" width="10" height="1" fill="#0a3c90"/><rect x="58" y="126" width="12" height="5" fill="#000"/><rect x="59" y="127" width="11" height="4" fill="#fff"/><rect x="59" y="127" width="10" height="3" fill="url(#tubeg)"/><rect x="59" y="127" width="10" height="1" fill="#0a3c90"/><rect x="71" y="126" width="12" height="5" fill="#000"/><rect x="72" y="127" width="11" height="4" fill="#fff"/><rect x="72" y="127" width="10" height="3" fill="url(#tubeg)"/><rect x="72" y="127" width="10" height="1" fill="#0a3c90"/><rect x="7" y="133" width="12" height="5" fill="#000"/><rect x="8" y="134" width="11" height="4" fill="#fff"/><rect x="8" y="134" width="10" height="3" fill="url(#tubeg)"/><rect x="8" y="134" width="10" height="1" fill="#0a3c90"/><rect x="20" y="133" width="12" height="5" fill="#000"/><rect x="21" y="134" width="11" height="4" fill="#fff"/><rect x="21" y="134" width="10" height="3" fill="url(#tubeg)"/><rect x="21" y="134" width="10" height="1" fill="#0a3c90"/><rect x="33" y="133" width="12" height="5" fill="#000"/><rect x="34" y="134" width="11" height="4" fill="#fff"/><rect x="34" y="134" width="10" height="3" fill="url(#tubeg)"/><rect x="34" y="134" width="10" height="1" fill="#0a3c90"/><rect x="46" y="133" width="12" height="5" fill="#000"/><rect x="47" y="134" width="11" height="4" fill="#fff"/><rect x="47" y="134" width="10" height="3" fill="url(#tubeg)"/><rect x="47" y="134" width="10" height="1" fill="#0a3c90"/><rect x="58" y="133" width="12" height="5" fill="#000"/><rect x="59" y="134" width="11" height="4" fill="#fff"/><rect x="59" y="134" width="10" height="3" fill="url(#tubeg)"/><rect x="59" y="134" width="10" height="1" fill="#0a3c90"/><rect x="71" y="133" width="12" height="5" fill="#000"/><rect x="72" y="134" width="11" height="4" fill="#fff"/><rect x="72" y="134" width="10" height="3" fill="url(#tubeg)"/><rect x="72" y="134" width="10" height="1" fill="#0a3c90"/><rect x="7" y="139" width="12" height="5" fill="#000"/><rect x="8" y="140" width="11" height="4" fill="#fff"/><rect x="8" y="140" width="10" height="3" fill="url(#tubeg)"/><rect x="8" y="140" width="10" height="1" fill="#0a3c90"/><rect x="20" y="139" width="12" height="5" fill="#000"/><rect x="21" y="140" width="11" height="4" fill="#fff"/><rect x="21" y="140" width="10" height="3" fill="url(#tubeg)"/><rect x="21" y="140" width="10" height="1" fill="#0a3c90"/><rect x="33" y="139" width="12" height="5" fill="#000"/><rect x="34" y="140" width="11" height="4" fill="#fff"/><rect x="34" y="140" width="10" height="3" fill="url(#tubeg)"/><rect x="34" y="140" width="10" height="1" fill="#0a3c90"/><rect x="46" y="139" width="12" height="5" fill="#000"/><rect x="47" y="140" width="11" height="4" fill="#fff"/><rect x="47" y="140" width="10" height="3" fill="url(#tubeg)"/><rect x="47" y="140" width="10" height="1" fill="#0a3c90"/><rect x="58" y="139" width="12" height="5" fill="#000"/><rect x="59" y="140" width="11" height="4" fill="#fff"/><rect x="59" y="140" width="10" height="3" fill="url(#tubeg)"/><rect x="59" y="140" width="10" height="1" fill="#0a3c90"/><rect x="71" y="139" width="12" height="5" fill="#000"/><rect x="72" y="140" width="11" height="4" fill="#fff"/><rect x="72" y="140" width="10" height="3" fill="url(#tubeg)"/><rect x="72" y="140" width="10" height="1" fill="#0a3c90"/><rect x="7" y="145" width="12" height="5" fill="#000"/><rect x="8" y="146" width="11" height="4" fill="#fff"/><rect x="8" y="146" width="10" height="3" fill="url(#tubeg)"/><rect x="8" y="146" width="10" height="1" fill="#0a3c90"/><rect x="20" y="145" width="12" height="5" fill="#000"/><rect x="21" y="146" width="11" height="4" fill="#fff"/><rect x="21" y="146" width="10" height="3" fill="url(#tubeg)"/><rect x="21" y="146" width="10" height="1" fill="#0a3c90"/><rect x="33" y="145" width="12" height="5" fill="#000"/><rect x="34" y="146" width="11" height="4" fill="#fff"/><rect x="34" y="146" width="10" height="3" fill="url(#tubeg)"/><rect x="34" y="146" width="10" height="1" fill="#0a3c90"/><rect x="46" y="145" width="12" height="5" fill="#000"/><rect x="47" y="146" width="11" height="4" fill="#fff"/><rect x="47" y="146" width="10" height="3" fill="url(#tubeg)"/><rect x="47" y="146" width="10" height="1" fill="#0a3c90"/><rect x="58" y="145" width="12" height="5" fill="#000"/><rect x="59" y="146" width="11" height="4" fill="#fff"/><rect x="59" y="146" width="10" height="3" fill="url(#tubeg)"/><rect x="59" y="146" width="10" height="1" fill="#0a3c90"/><rect x="71" y="145" width="12" height="5" fill="#000"/><rect x="72" y="146" width="11" height="4" fill="#fff"/><rect x="72" y="146" width="10" height="3" fill="url(#tubeg)"/><rect x="72" y="146" width="10" height="1" fill="#0a3c90"/><rect x="7" y="152" width="12" height="5" fill="#000"/><rect x="8" y="153" width="11" height="4" fill="#fff"/><rect x="8" y="153" width="10" height="3" fill="url(#tubeg)"/><rect x="8" y="153" width="10" height="1" fill="#0a3c90"/><rect x="20" y="152" width="12" height="5" fill="#000"/><rect x="21" y="153" width="11" height="4" fill="#fff"/><rect x="21" y="153" width="10" height="3" fill="url(#tubeg)"/><rect x="21" y="153" width="10" height="1" fill="#0a3c90"/><rect x="33" y="152" width="12" height="5" fill="#000"/><rect x="34" y="153" width="11" height="4" fill="#fff"/><rect x="34" y="153" width="10" height="3" fill="url(#tubeg)"/><rect x="34" y="153" width="10" height="1" fill="#0a3c90"/><rect x="46" y="152" width="12" height="5" fill="#000"/><rect x="47" y="153" width="11" height="4" fill="#fff"/><rect x="47" y="153" width="10" height="3" fill="url(#tubeg)"/><rect x="47" y="153" width="10" height="1" fill="#0a3c90"/><rect x="58" y="152" width="12" height="5" fill="#000"/><rect x="59" y="153" width="11" height="4" fill="#fff"/><rect x="59" y="153" width="10" height="3" fill="url(#tubeg)"/><rect x="59" y="153" width="10" height="1" fill="#0a3c90"/><rect x="71" y="152" width="12" height="5" fill="#000"/><rect x="72" y="153" width="11" height="4" fill="#fff"/><rect x="72" y="153" width="10" height="3" fill="url(#tubeg)"/><rect x="72" y="153" width="10" height="1" fill="#0a3c90"/><rect x="7" y="158" width="12" height="5" fill="#000"/><rect x="8" y="159" width="11" height="4" fill="#fff"/><rect x="8" y="159" width="10" height="3" fill="url(#tubeg)"/><rect x="8" y="159" width="10" height="1" fill="#0a3c90"/><rect x="20" y="158" width="12" height="5" fill="#000"/><rect x="21" y="159" width="11" height="4" fill="#fff"/><rect x="21" y="159" width="10" height="3" fill="url(#tubeg)"/><rect x="21" y="159" width="10" height="1" fill="#0a3c90"/><rect x="33" y="158" width="12" height="5" fill="#000"/><rect x="34" y="159" width="11" height="4" fill="#fff"/><rect x="34" y="159" width="10" height="3" fill="url(#tubeg)"/><rect x="34" y="159" width="10" height="1" fill="#0a3c90"/><rect x="46" y="158" width="12" height="5" fill="#000"/><rect x="47" y="159" width="11" height="4" fill="#fff"/><rect x="47" y="159" width="10" height="3" fill="url(#tubeg)"/><rect x="47" y="159" width="10" height="1" fill="#0a3c90"/><rect x="58" y="158" width="12" height="5" fill="#000"/><rect x="59" y="159" width="11" height="4" fill="#fff"/><rect x="59" y="159" width="10" height="3" fill="url(#tubeg)"/><rect x="59" y="159" width="10" height="1" fill="#0a3c90"/><rect x="71" y="158" width="12" height="5" fill="#000"/><rect x="72" y="159" width="11" height="4" fill="#fff"/><rect x="72" y="159" width="10" height="3" fill="url(#tubeg)"/><rect x="72" y="159" width="10" height="1" fill="#0a3c90"/><rect x="7" y="164" width="12" height="5" fill="#000"/><rect x="8" y="165" width="11" height="4" fill="#fff"/><rect x="8" y="165" width="10" height="3" fill="url(#tubeg)"/><rect x="8" y="165" width="10" height="1" fill="#0a3c90"/><rect x="20" y="164" width="12" height="5" fill="#000"/><rect x="21" y="165" width="11" height="4" fill="#fff"/><rect x="21" y="165" width="10" height="3" fill="url(#tubeg)"/><rect x="21" y="165" width="10" height="1" fill="#0a3c90"/><rect x="33" y="164" width="12" height="5" fill="#000"/><rect x="34" y="165" width="11" height="4" fill="#fff"/><rect x="34" y="165" width="10" height="3" fill="url(#tubeg)"/><rect x="34" y="165" width="10" height="1" fill="#0a3c90"/><rect x="46" y="164" width="12" height="5" fill="#000"/><rect x="47" y="165" width="11" height="4" fill="#fff"/><rect x="47" y="165" width="10" height="3" fill="url(#tubeg)"/><rect x="47" y="165" width="10" height="1" fill="#0a3c90"/><rect x="58" y="164" width="12" height="5" fill="#000"/><rect x="59" y="165" width="11" height="4" fill="#fff"/><rect x="59" y="165" width="10" height="3" fill="url(#tubeg)"/><rect x="59" y="165" width="10" height="1" fill="#0a3c90"/><rect x="71" y="164" width="12" height="5" fill="#000"/><rect x="72" y="165" width="11" height="4" fill="#fff"/><rect x="72" y="165" width="10" height="3" fill="url(#tubeg)"/><rect x="72" y="165" width="10" height="1" fill="#0a3c90"/><rect x="1" y="193" width="88" height="3" fill="#fbfbfb"/><rect x="1" y="196" width="89" height="89" fill="#101010"/><rect x="1" y="196" width="88" height="88" fill="#0080ff"/><rect x="7" y="213" width="12" height="5" fill="#000"/><rect x="8" y="214" width="11" height="4" fill="#fff"/><rect x="8" y="214" width="10" height="3" fill="url(#tubeg)"/><rect x="8" y="214" width="10" height="1" fill="#0a3c90"/><rect x="20" y="213" width="12" height="5" fill="#000"/><rect x="21" y="214" width="11" height="4" fill="#fff"/><rect x="21" y="214" width="10" height="3" fill="url(#tubeg)"/><rect x="21" y="214" width="10" height="1" fill="#0a3c90"/><rect x="33" y="213" width="12" height="5" fill="#000"/><rect x="34" y="214" width="11" height="4" fill="#fff"/><rect x="34" y="214" width="10" height="3" fill="url(#tubeg)"/><rect x="34" y="214" width="10" height="1" fill="#0a3c90"/><rect x="46" y="213" width="12" height="5" fill="#000"/><rect x="47" y="214" width="11" height="4" fill="#fff"/><rect x="47" y="214" width="10" height="3" fill="url(#tubeg)"/><rect x="47" y="214" width="10" height="1" fill="#0a3c90"/><rect x="58" y="213" width="12" height="5" fill="#000"/><rect x="59" y="214" width="11" height="4" fill="#fff"/><rect x="59" y="214" width="10" height="3" fill="url(#tubeg)"/><rect x="59" y="214" width="10" height="1" fill="#0a3c90"/><rect x="71" y="213" width="12" height="5" fill="#000"/><rect x="72" y="214" width="11" height="4" fill="#fff"/><rect x="72" y="214" width="10" height="3" fill="url(#tubeg)"/><rect x="72" y="214" width="10" height="1" fill="#0a3c90"/><rect x="7" y="219" width="12" height="5" fill="#000"/><rect x="8" y="220" width="11" height="4" fill="#fff"/><rect x="8" y="220" width="10" height="3" fill="url(#tubeg)"/><rect x="8" y="220" width="10" height="1" fill="#0a3c90"/><rect x="20" y="219" width="12" height="5" fill="#000"/><rect x="21" y="220" width="11" height="4" fill="#fff"/><rect x="21" y="220" width="10" height="3" fill="url(#tubeg)"/><rect x="21" y="220" width="10" height="1" fill="#0a3c90"/><rect x="33" y="219" width="12" height="5" fill="#000"/><rect x="34" y="220" width="11" height="4" fill="#fff"/><rect x="34" y="220" width="10" height="3" fill="url(#tubeg)"/><rect x="34" y="220" width="10" height="1" fill="#0a3c90"/><rect x="46" y="219" width="12" height="5" fill="#000"/><rect x="47" y="220" width="11" height="4" fill="#fff"/><rect x="47" y="220" width="10" height="3" fill="url(#tubeg)"/><rect x="47" y="220" width="10" height="1" fill="#0a3c90"/><rect x="58" y="219" width="12" height="5" fill="#000"/><rect x="59" y="220" width="11" height="4" fill="#fff"/><rect x="59" y="220" width="10" height="3" fill="url(#tubeg)"/><rect x="59" y="220" width="10" height="1" fill="#0a3c90"/><rect x="71" y="219" width="12" height="5" fill="#000"/><rect x="72" y="220" width="11" height="4" fill="#fff"/><rect x="72" y="220" width="10" height="3" fill="url(#tubeg)"/><rect x="72" y="220" width="10" height="1" fill="#0a3c90"/><rect x="7" y="226" width="12" height="5" fill="#000"/><rect x="8" y="227" width="11" height="4" fill="#fff"/><rect x="8" y="227" width="10" height="3" fill="url(#tubeg)"/><rect x="8" y="227" width="10" height="1" fill="#0a3c90"/><rect x="20" y="226" width="12" height="5" fill="#000"/><rect x="21" y="227" width="11" height="4" fill="#fff"/><rect x="21" y="227" width="10" height="3" fill="url(#tubeg)"/><rect x="21" y="227" width="10" height="1" fill="#0a3c90"/><rect x="33" y="226" width="12" height="5" fill="#000"/><rect x="34" y="227" width="11" height="4" fill="#fff"/><rect x="34" y="227" width="10" height="3" fill="url(#tubeg)"/><rect x="34" y="227" width="10" height="1" fill="#0a3c90"/><rect x="46" y="226" width="12" height="5" fill="#000"/><rect x="47" y="227" width="11" height="4" fill="#fff"/><rect x="47" y="227" width="10" height="3" fill="url(#tubeg)"/><rect x="47" y="227" width="10" height="1" fill="#0a3c90"/><rect x="58" y="226" width="12" height="5" fill="#000"/><rect x="59" y="227" width="11" height="4" fill="#fff"/><rect x="59" y="227" width="10" height="3" fill="url(#tubeg)"/><rect x="59" y="227" width="10" height="1" fill="#0a3c90"/><rect x="71" y="226" width="12" height="5" fill="#000"/><rect x="72" y="227" width="11" height="4" fill="#fff"/><rect x="72" y="227" width="10" height="3" fill="url(#tubeg)"/><rect x="72" y="227" width="10" height="1" fill="#0a3c90"/><rect x="7" y="232" width="12" height="5" fill="#000"/><rect x="8" y="233" width="11" height="4" fill="#fff"/><rect x="8" y="233" width="10" height="3" fill="url(#tubeg)"/><rect x="8" y="233" width="10" height="1" fill="#0a3c90"/><rect x="20" y="232" width="12" height="5" fill="#000"/><rect x="21" y="233" width="11" height="4" fill="#fff"/><rect x="21" y="233" width="10" height="3" fill="url(#tubeg)"/><rect x="21" y="233" width="10" height="1" fill="#0a3c90"/><rect x="33" y="232" width="12" height="5" fill="#000"/><rect x="34" y="233" width="11" height="4" fill="#fff"/><rect x="34" y="233" width="10" height="3" fill="url(#tubeg)"/><rect x="34" y="233" width="10" height="1" fill="#0a3c90"/><rect x="46" y="232" width="12" height="5" fill="#000"/><rect x="47" y="233" width="11" height="4" fill="#fff"/><rect x="47" y="233" width="10" height="3" fill="url(#tubeg)"/><rect x="47" y="233" width="10" height="1" fill="#0a3c90"/><rect x="58" y="232" width="12" height="5" fill="#000"/><rect x="59" y="233" width="11" height="4" fill="#fff"/><rect x="59" y="233" width="10" height="3" fill="url(#tubeg)"/><rect x="59" y="233" width="10" height="1" fill="#0a3c90"/><rect x="71" y="232" width="12" height="5" fill="#000"/><rect x="72" y="233" width="11" height="4" fill="#fff"/><rect x="72" y="233" width="10" height="3" fill="url(#tubeg)"/><rect x="72" y="233" width="10" height="1" fill="#0a3c90"/><rect x="7" y="238" width="12" height="5" fill="#000"/><rect x="8" y="239" width="11" height="4" fill="#fff"/><rect x="8" y="239" width="10" height="3" fill="url(#tubeg)"/><rect x="8" y="239" width="10" height="1" fill="#0a3c90"/><rect x="20" y="238" width="12" height="5" fill="#000"/><rect x="21" y="239" width="11" height="4" fill="#fff"/><rect x="21" y="239" width="10" height="3" fill="url(#tubeg)"/><rect x="21" y="239" width="10" height="1" fill="#0a3c90"/><rect x="33" y="238" width="12" height="5" fill="#000"/><rect x="34" y="239" width="11" height="4" fill="#fff"/><rect x="34" y="239" width="10" height="3" fill="url(#tubeg)"/><rect x="34" y="239" width="10" height="1" fill="#0a3c90"/><rect x="46" y="238" width="12" height="5" fill="#000"/><rect x="47" y="239" width="11" height="4" fill="#fff"/><rect x="47" y="239" width="10" height="3" fill="url(#tubeg)"/><rect x="47" y="239" width="10" height="1" fill="#0a3c90"/><rect x="58" y="238" width="12" height="5" fill="#000"/><rect x="59" y="239" width="11" height="4" fill="#fff"/><rect x="59" y="239" width="10" height="3" fill="url(#tubeg)"/><rect x="59" y="239" width="10" height="1" fill="#0a3c90"/><rect x="71" y="238" width="12" height="5" fill="#000"/><rect x="72" y="239" width="11" height="4" fill="#fff"/><rect x="72" y="239" width="10" height="3" fill="url(#tubeg)"/><rect x="72" y="239" width="10" height="1" fill="#0a3c90"/><rect x="7" y="245" width="12" height="5" fill="#000"/><rect x="8" y="246" width="11" height="4" fill="#fff"/><rect x="8" y="246" width="10" height="3" fill="url(#tubeg)"/><rect x="8" y="246" width="10" height="1" fill="#0a3c90"/><rect x="20" y="245" width="12" height="5" fill="#000"/><rect x="21" y="246" width="11" height="4" fill="#fff"/><rect x="21" y="246" width="10" height="3" fill="url(#tubeg)"/><rect x="21" y="246" width="10" height="1" fill="#0a3c90"/><rect x="33" y="245" width="12" height="5" fill="#000"/><rect x="34" y="246" width="11" height="4" fill="#fff"/><rect x="34" y="246" width="10" height="3" fill="url(#tubeg)"/><rect x="34" y="246" width="10" height="1" fill="#0a3c90"/><rect x="46" y="245" width="12" height="5" fill="#000"/><rect x="47" y="246" width="11" height="4" fill="#fff"/><rect x="47" y="246" width="10" height="3" fill="url(#tubeg)"/><rect x="47" y="246" width="10" height="1" fill="#0a3c90"/><rect x="58" y="245" width="12" height="5" fill="#000"/><rect x="59" y="246" width="11" height="4" fill="#fff"/><rect x="59" y="246" width="10" height="3" fill="url(#tubeg)"/><rect x="59" y="246" width="10" height="1" fill="#0a3c90"/><rect x="71" y="245" width="12" height="5" fill="#000"/><rect x="72" y="246" width="11" height="4" fill="#fff"/><rect x="72" y="246" width="10" height="3" fill="url(#tubeg)"/><rect x="72" y="246" width="10" height="1" fill="#0a3c90"/><rect x="7" y="251" width="12" height="5" fill="#000"/><rect x="8" y="252" width="11" height="4" fill="#fff"/><rect x="8" y="252" width="10" height="3" fill="url(#tubeg)"/><rect x="8" y="252" width="10" height="1" fill="#0a3c90"/><rect x="20" y="251" width="12" height="5" fill="#000"/><rect x="21" y="252" width="11" height="4" fill="#fff"/><rect x="21" y="252" width="10" height="3" fill="url(#tubeg)"/><rect x="21" y="252" width="10" height="1" fill="#0a3c90"/><rect x="33" y="251" width="12" height="5" fill="#000"/><rect x="34" y="252" width="11" height="4" fill="#fff"/><rect x="34" y="252" width="10" height="3" fill="url(#tubeg)"/><rect x="34" y="252" width="10" height="1" fill="#0a3c90"/><rect x="46" y="251" width="12" height="5" fill="#000"/><rect x="47" y="252" width="11" height="4" fill="#fff"/><rect x="47" y="252" width="10" height="3" fill="url(#tubeg)"/><rect x="47" y="252" width="10" height="1" fill="#0a3c90"/><rect x="58" y="251" width="12" height="5" fill="#000"/><rect x="59" y="252" width="11" height="4" fill="#fff"/><rect x="59" y="252" width="10" height="3" fill="url(#tubeg)"/><rect x="59" y="252" width="10" height="1" fill="#0a3c90"/><rect x="71" y="251" width="12" height="5" fill="#000"/><rect x="72" y="252" width="11" height="4" fill="#fff"/><rect x="72" y="252" width="10" height="3" fill="url(#tubeg)"/><rect x="72" y="252" width="10" height="1" fill="#0a3c90"/><rect x="7" y="257" width="12" height="5" fill="#000"/><rect x="8" y="258" width="11" height="4" fill="#fff"/><rect x="8" y="258" width="10" height="3" fill="url(#tubeg)"/><rect x="8" y="258" width="10" height="1" fill="#0a3c90"/><rect x="20" y="257" width="12" height="5" fill="#000"/><rect x="21" y="258" width="11" height="4" fill="#fff"/><rect x="21" y="258" width="10" height="3" fill="url(#tubeg)"/><rect x="21" y="258" width="10" height="1" fill="#0a3c90"/><rect x="33" y="257" width="12" height="5" fill="#000"/><rect x="34" y="258" width="11" height="4" fill="#fff"/><rect x="34" y="258" width="10" height="3" fill="url(#tubeg)"/><rect x="34" y="258" width="10" height="1" fill="#0a3c90"/><rect x="46" y="257" width="12" height="5" fill="#000"/><rect x="47" y="258" width="11" height="4" fill="#fff"/><rect x="47" y="258" width="10" height="3" fill="url(#tubeg)"/><rect x="47" y="258" width="10" height="1" fill="#0a3c90"/><rect x="58" y="257" width="12" height="5" fill="#000"/><rect x="59" y="258" width="11" height="4" fill="#fff"/><rect x="59" y="258" width="10" height="3" fill="url(#tubeg)"/><rect x="59" y="258" width="10" height="1" fill="#0a3c90"/><rect x="71" y="257" width="12" height="5" fill="#000"/><rect x="72" y="258" width="11" height="4" fill="#fff"/><rect x="72" y="258" width="10" height="3" fill="url(#tubeg)"/><rect x="72" y="258" width="10" height="1" fill="#0a3c90"/></svg><svg class="a" style="left:573px;top:159px" width="90" height="295"><rect x="0" y="0" width="90" height="295" fill="#f2f2f2"/><rect x="1" y="1" width="89" height="294" fill="#101010"/><rect x="1" y="1" width="88" height="293" fill="#d3d3d3"/><rect x="1" y="11" width="88" height="1" fill="#f6f6f6"/><rect x="1" y="12" width="89" height="88" fill="#101010"/><rect x="1" y="12" width="88" height="87" fill="#0080ff"/><rect x="7" y="28" width="12" height="5" fill="#000"/><rect x="8" y="29" width="11" height="4" fill="#fff"/><rect x="8" y="29" width="10" height="3" fill="url(#tubeg)"/><rect x="8" y="29" width="10" height="1" fill="#0a3c90"/><rect x="20" y="28" width="12" height="5" fill="#000"/><rect x="21" y="29" width="11" height="4" fill="#fff"/><rect x="21" y="29" width="10" height="3" fill="url(#tubeg)"/><rect x="21" y="29" width="10" height="1" fill="#0a3c90"/><rect x="33" y="28" width="12" height="5" fill="#000"/><rect x="34" y="29" width="11" height="4" fill="#fff"/><rect x="34" y="29" width="10" height="3" fill="url(#tubeg)"/><rect x="34" y="29" width="10" height="1" fill="#0a3c90"/><rect x="46" y="28" width="12" height="5" fill="#000"/><rect x="47" y="29" width="11" height="4" fill="#fff"/><rect x="47" y="29" width="10" height="3" fill="url(#tubeg)"/><rect x="47" y="29" width="10" height="1" fill="#0a3c90"/><rect x="58" y="28" width="12" height="5" fill="#000"/><rect x="59" y="29" width="11" height="4" fill="#fff"/><rect x="59" y="29" width="10" height="3" fill="url(#tubeg)"/><rect x="59" y="29" width="10" height="1" fill="#0a3c90"/><rect x="71" y="28" width="12" height="5" fill="#000"/><rect x="72" y="29" width="11" height="4" fill="#fff"/><rect x="72" y="29" width="10" height="3" fill="url(#tubeg)"/><rect x="72" y="29" width="10" height="1" fill="#0a3c90"/><rect x="7" y="34" width="12" height="5" fill="#000"/><rect x="8" y="35" width="11" height="4" fill="#fff"/><rect x="8" y="35" width="10" height="3" fill="url(#tubeg)"/><rect x="8" y="35" width="10" height="1" fill="#0a3c90"/><rect x="20" y="34" width="12" height="5" fill="#000"/><rect x="21" y="35" width="11" height="4" fill="#fff"/><rect x="21" y="35" width="10" height="3" fill="url(#tubeg)"/><rect x="21" y="35" width="10" height="1" fill="#0a3c90"/><rect x="33" y="34" width="12" height="5" fill="#000"/><rect x="34" y="35" width="11" height="4" fill="#fff"/><rect x="34" y="35" width="10" height="3" fill="url(#tubeg)"/><rect x="34" y="35" width="10" height="1" fill="#0a3c90"/><rect x="46" y="34" width="12" height="5" fill="#000"/><rect x="47" y="35" width="11" height="4" fill="#fff"/><rect x="47" y="35" width="10" height="3" fill="url(#tubeg)"/><rect x="47" y="35" width="10" height="1" fill="#0a3c90"/><rect x="58" y="34" width="12" height="5" fill="#000"/><rect x="59" y="35" width="11" height="4" fill="#fff"/><rect x="59" y="35" width="10" height="3" fill="url(#tubeg)"/><rect x="59" y="35" width="10" height="1" fill="#0a3c90"/><rect x="71" y="34" width="12" height="5" fill="#000"/><rect x="72" y="35" width="11" height="4" fill="#fff"/><rect x="72" y="35" width="10" height="3" fill="url(#tubeg)"/><rect x="72" y="35" width="10" height="1" fill="#0a3c90"/><rect x="7" y="41" width="12" height="5" fill="#000"/><rect x="8" y="42" width="11" height="4" fill="#fff"/><rect x="8" y="42" width="10" height="3" fill="url(#tubeg)"/><rect x="8" y="42" width="10" height="1" fill="#0a3c90"/><rect x="20" y="41" width="12" height="5" fill="#000"/><rect x="21" y="42" width="11" height="4" fill="#fff"/><rect x="21" y="42" width="10" height="3" fill="url(#tubeg)"/><rect x="21" y="42" width="10" height="1" fill="#0a3c90"/><rect x="33" y="41" width="12" height="5" fill="#000"/><rect x="34" y="42" width="11" height="4" fill="#fff"/><rect x="34" y="42" width="10" height="3" fill="url(#tubeg)"/><rect x="34" y="42" width="10" height="1" fill="#0a3c90"/><rect x="46" y="41" width="12" height="5" fill="#000"/><rect x="47" y="42" width="11" height="4" fill="#fff"/><rect x="47" y="42" width="10" height="3" fill="url(#tubeg)"/><rect x="47" y="42" width="10" height="1" fill="#0a3c90"/><rect x="58" y="41" width="12" height="5" fill="#000"/><rect x="59" y="42" width="11" height="4" fill="#fff"/><rect x="59" y="42" width="10" height="3" fill="url(#tubeg)"/><rect x="59" y="42" width="10" height="1" fill="#0a3c90"/><rect x="71" y="41" width="12" height="5" fill="#000"/><rect x="72" y="42" width="11" height="4" fill="#fff"/><rect x="72" y="42" width="10" height="3" fill="url(#tubeg)"/><rect x="72" y="42" width="10" height="1" fill="#0a3c90"/><rect x="7" y="47" width="12" height="5" fill="#000"/><rect x="8" y="48" width="11" height="4" fill="#fff"/><rect x="8" y="48" width="10" height="3" fill="url(#tubeg)"/><rect x="8" y="48" width="10" height="1" fill="#0a3c90"/><rect x="20" y="47" width="12" height="5" fill="#000"/><rect x="21" y="48" width="11" height="4" fill="#fff"/><rect x="21" y="48" width="10" height="3" fill="url(#tubeg)"/><rect x="21" y="48" width="10" height="1" fill="#0a3c90"/><rect x="33" y="47" width="12" height="5" fill="#000"/><rect x="34" y="48" width="11" height="4" fill="#fff"/><rect x="34" y="48" width="10" height="3" fill="url(#tubeg)"/><rect x="34" y="48" width="10" height="1" fill="#0a3c90"/><rect x="46" y="47" width="12" height="5" fill="#000"/><rect x="47" y="48" width="11" height="4" fill="#fff"/><rect x="47" y="48" width="10" height="3" fill="url(#tubeg)"/><rect x="47" y="48" width="10" height="1" fill="#0a3c90"/><rect x="58" y="47" width="12" height="5" fill="#000"/><rect x="59" y="48" width="11" height="4" fill="#fff"/><rect x="59" y="48" width="10" height="3" fill="url(#tubeg)"/><rect x="59" y="48" width="10" height="1" fill="#0a3c90"/><rect x="71" y="47" width="12" height="5" fill="#000"/><rect x="72" y="48" width="11" height="4" fill="#fff"/><rect x="72" y="48" width="10" height="3" fill="url(#tubeg)"/><rect x="72" y="48" width="10" height="1" fill="#0a3c90"/><rect x="7" y="53" width="12" height="5" fill="#000"/><rect x="8" y="54" width="11" height="4" fill="#fff"/><rect x="8" y="54" width="10" height="3" fill="url(#tubeg)"/><rect x="8" y="54" width="10" height="1" fill="#0a3c90"/><rect x="20" y="53" width="12" height="5" fill="#000"/><rect x="21" y="54" width="11" height="4" fill="#fff"/><rect x="21" y="54" width="10" height="3" fill="url(#tubeg)"/><rect x="21" y="54" width="10" height="1" fill="#0a3c90"/><rect x="33" y="53" width="12" height="5" fill="#000"/><rect x="34" y="54" width="11" height="4" fill="#fff"/><rect x="34" y="54" width="10" height="3" fill="url(#tubeg)"/><rect x="34" y="54" width="10" height="1" fill="#0a3c90"/><rect x="46" y="53" width="12" height="5" fill="#000"/><rect x="47" y="54" width="11" height="4" fill="#fff"/><rect x="47" y="54" width="10" height="3" fill="url(#tubeg)"/><rect x="47" y="54" width="10" height="1" fill="#0a3c90"/><rect x="58" y="53" width="12" height="5" fill="#000"/><rect x="59" y="54" width="11" height="4" fill="#fff"/><rect x="59" y="54" width="10" height="3" fill="url(#tubeg)"/><rect x="59" y="54" width="10" height="1" fill="#0a3c90"/><rect x="71" y="53" width="12" height="5" fill="#000"/><rect x="72" y="54" width="11" height="4" fill="#fff"/><rect x="72" y="54" width="10" height="3" fill="url(#tubeg)"/><rect x="72" y="54" width="10" height="1" fill="#0a3c90"/><rect x="7" y="60" width="12" height="5" fill="#000"/><rect x="8" y="61" width="11" height="4" fill="#fff"/><rect x="8" y="61" width="10" height="3" fill="url(#tubeg)"/><rect x="8" y="61" width="10" height="1" fill="#0a3c90"/><rect x="20" y="60" width="12" height="5" fill="#000"/><rect x="21" y="61" width="11" height="4" fill="#fff"/><rect x="21" y="61" width="10" height="3" fill="url(#tubeg)"/><rect x="21" y="61" width="10" height="1" fill="#0a3c90"/><rect x="33" y="60" width="12" height="5" fill="#000"/><rect x="34" y="61" width="11" height="4" fill="#fff"/><rect x="34" y="61" width="10" height="3" fill="url(#tubeg)"/><rect x="34" y="61" width="10" height="1" fill="#0a3c90"/><rect x="46" y="60" width="12" height="5" fill="#000"/><rect x="47" y="61" width="11" height="4" fill="#fff"/><rect x="47" y="61" width="10" height="3" fill="url(#tubeg)"/><rect x="47" y="61" width="10" height="1" fill="#0a3c90"/><rect x="58" y="60" width="12" height="5" fill="#000"/><rect x="59" y="61" width="11" height="4" fill="#fff"/><rect x="59" y="61" width="10" height="3" fill="url(#tubeg)"/><rect x="59" y="61" width="10" height="1" fill="#0a3c90"/><rect x="71" y="60" width="12" height="5" fill="#000"/><rect x="72" y="61" width="11" height="4" fill="#fff"/><rect x="72" y="61" width="10" height="3" fill="url(#tubeg)"/><rect x="72" y="61" width="10" height="1" fill="#0a3c90"/><rect x="7" y="66" width="12" height="5" fill="#000"/><rect x="8" y="67" width="11" height="4" fill="#fff"/><rect x="8" y="67" width="10" height="3" fill="url(#tubeg)"/><rect x="8" y="67" width="10" height="1" fill="#0a3c90"/><rect x="20" y="66" width="12" height="5" fill="#000"/><rect x="21" y="67" width="11" height="4" fill="#fff"/><rect x="21" y="67" width="10" height="3" fill="url(#tubeg)"/><rect x="21" y="67" width="10" height="1" fill="#0a3c90"/><rect x="33" y="66" width="12" height="5" fill="#000"/><rect x="34" y="67" width="11" height="4" fill="#fff"/><rect x="34" y="67" width="10" height="3" fill="url(#tubeg)"/><rect x="34" y="67" width="10" height="1" fill="#0a3c90"/><rect x="46" y="66" width="12" height="5" fill="#000"/><rect x="47" y="67" width="11" height="4" fill="#fff"/><rect x="47" y="67" width="10" height="3" fill="url(#tubeg)"/><rect x="47" y="67" width="10" height="1" fill="#0a3c90"/><rect x="58" y="66" width="12" height="5" fill="#000"/><rect x="59" y="67" width="11" height="4" fill="#fff"/><rect x="59" y="67" width="10" height="3" fill="url(#tubeg)"/><rect x="59" y="67" width="10" height="1" fill="#0a3c90"/><rect x="71" y="66" width="12" height="5" fill="#000"/><rect x="72" y="67" width="11" height="4" fill="#fff"/><rect x="72" y="67" width="10" height="3" fill="url(#tubeg)"/><rect x="72" y="67" width="10" height="1" fill="#0a3c90"/><rect x="7" y="72" width="12" height="5" fill="#000"/><rect x="8" y="73" width="11" height="4" fill="#fff"/><rect x="8" y="73" width="10" height="3" fill="url(#tubeg)"/><rect x="8" y="73" width="10" height="1" fill="#0a3c90"/><rect x="20" y="72" width="12" height="5" fill="#000"/><rect x="21" y="73" width="11" height="4" fill="#fff"/><rect x="21" y="73" width="10" height="3" fill="url(#tubeg)"/><rect x="21" y="73" width="10" height="1" fill="#0a3c90"/><rect x="33" y="72" width="12" height="5" fill="#000"/><rect x="34" y="73" width="11" height="4" fill="#fff"/><rect x="34" y="73" width="10" height="3" fill="url(#tubeg)"/><rect x="34" y="73" width="10" height="1" fill="#0a3c90"/><rect x="46" y="72" width="12" height="5" fill="#000"/><rect x="47" y="73" width="11" height="4" fill="#fff"/><rect x="47" y="73" width="10" height="3" fill="url(#tubeg)"/><rect x="47" y="73" width="10" height="1" fill="#0a3c90"/><rect x="58" y="72" width="12" height="5" fill="#000"/><rect x="59" y="73" width="11" height="4" fill="#fff"/><rect x="59" y="73" width="10" height="3" fill="url(#tubeg)"/><rect x="59" y="73" width="10" height="1" fill="#0a3c90"/><rect x="71" y="72" width="12" height="5" fill="#000"/><rect x="72" y="73" width="11" height="4" fill="#fff"/><rect x="72" y="73" width="10" height="3" fill="url(#tubeg)"/><rect x="72" y="73" width="10" height="1" fill="#0a3c90"/><rect x="1" y="101" width="88" height="3" fill="#fbfbfb"/><rect x="1" y="104" width="89" height="88" fill="#101010"/><rect x="1" y="104" width="88" height="87" fill="#0080ff"/><rect x="7" y="120" width="12" height="5" fill="#000"/><rect x="8" y="121" width="11" height="4" fill="#fff"/><rect x="8" y="121" width="10" height="3" fill="url(#tubeg)"/><rect x="8" y="121" width="10" height="1" fill="#0a3c90"/><rect x="20" y="120" width="12" height="5" fill="#000"/><rect x="21" y="121" width="11" height="4" fill="#fff"/><rect x="21" y="121" width="10" height="3" fill="url(#tubeg)"/><rect x="21" y="121" width="10" height="1" fill="#0a3c90"/><rect x="33" y="120" width="12" height="5" fill="#000"/><rect x="34" y="121" width="11" height="4" fill="#fff"/><rect x="34" y="121" width="10" height="3" fill="url(#tubeg)"/><rect x="34" y="121" width="10" height="1" fill="#0a3c90"/><rect x="46" y="120" width="12" height="5" fill="#000"/><rect x="47" y="121" width="11" height="4" fill="#fff"/><rect x="47" y="121" width="10" height="3" fill="url(#tubeg)"/><rect x="47" y="121" width="10" height="1" fill="#0a3c90"/><rect x="58" y="120" width="12" height="5" fill="#000"/><rect x="59" y="121" width="11" height="4" fill="#fff"/><rect x="59" y="121" width="10" height="3" fill="url(#tubeg)"/><rect x="59" y="121" width="10" height="1" fill="#0a3c90"/><rect x="71" y="120" width="12" height="5" fill="#000"/><rect x="72" y="121" width="11" height="4" fill="#fff"/><rect x="72" y="121" width="10" height="3" fill="url(#tubeg)"/><rect x="72" y="121" width="10" height="1" fill="#0a3c90"/><rect x="7" y="126" width="12" height="5" fill="#000"/><rect x="8" y="127" width="11" height="4" fill="#fff"/><rect x="8" y="127" width="10" height="3" fill="url(#tubeg)"/><rect x="8" y="127" width="10" height="1" fill="#0a3c90"/><rect x="20" y="126" width="12" height="5" fill="#000"/><rect x="21" y="127" width="11" height="4" fill="#fff"/><rect x="21" y="127" width="10" height="3" fill="url(#tubeg)"/><rect x="21" y="127" width="10" height="1" fill="#0a3c90"/><rect x="33" y="126" width="12" height="5" fill="#000"/><rect x="34" y="127" width="11" height="4" fill="#fff"/><rect x="34" y="127" width="10" height="3" fill="url(#tubeg)"/><rect x="34" y="127" width="10" height="1" fill="#0a3c90"/><rect x="46" y="126" width="12" height="5" fill="#000"/><rect x="47" y="127" width="11" height="4" fill="#fff"/><rect x="47" y="127" width="10" height="3" fill="url(#tubeg)"/><rect x="47" y="127" width="10" height="1" fill="#0a3c90"/><rect x="58" y="126" width="12" height="5" fill="#000"/><rect x="59" y="127" width="11" height="4" fill="#fff"/><rect x="59" y="127" width="10" height="3" fill="url(#tubeg)"/><rect x="59" y="127" width="10" height="1" fill="#0a3c90"/><rect x="71" y="126" width="12" height="5" fill="#000"/><rect x="72" y="127" width="11" height="4" fill="#fff"/><rect x="72" y="127" width="10" height="3" fill="url(#tubeg)"/><rect x="72" y="127" width="10" height="1" fill="#0a3c90"/><rect x="7" y="133" width="12" height="5" fill="#000"/><rect x="8" y="134" width="11" height="4" fill="#fff"/><rect x="8" y="134" width="10" height="3" fill="url(#tubeg)"/><rect x="8" y="134" width="10" height="1" fill="#0a3c90"/><rect x="20" y="133" width="12" height="5" fill="#000"/><rect x="21" y="134" width="11" height="4" fill="#fff"/><rect x="21" y="134" width="10" height="3" fill="url(#tubeg)"/><rect x="21" y="134" width="10" height="1" fill="#0a3c90"/><rect x="33" y="133" width="12" height="5" fill="#000"/><rect x="34" y="134" width="11" height="4" fill="#fff"/><rect x="34" y="134" width="10" height="3" fill="url(#tubeg)"/><rect x="34" y="134" width="10" height="1" fill="#0a3c90"/><rect x="46" y="133" width="12" height="5" fill="#000"/><rect x="47" y="134" width="11" height="4" fill="#fff"/><rect x="47" y="134" width="10" height="3" fill="url(#tubeg)"/><rect x="47" y="134" width="10" height="1" fill="#0a3c90"/><rect x="58" y="133" width="12" height="5" fill="#000"/><rect x="59" y="134" width="11" height="4" fill="#fff"/><rect x="59" y="134" width="10" height="3" fill="url(#tubeg)"/><rect x="59" y="134" width="10" height="1" fill="#0a3c90"/><rect x="71" y="133" width="12" height="5" fill="#000"/><rect x="72" y="134" width="11" height="4" fill="#fff"/><rect x="72" y="134" width="10" height="3" fill="url(#tubeg)"/><rect x="72" y="134" width="10" height="1" fill="#0a3c90"/><rect x="7" y="139" width="12" height="5" fill="#000"/><rect x="8" y="140" width="11" height="4" fill="#fff"/><rect x="8" y="140" width="10" height="3" fill="url(#tubeg)"/><rect x="8" y="140" width="10" height="1" fill="#0a3c90"/><rect x="20" y="139" width="12" height="5" fill="#000"/><rect x="21" y="140" width="11" height="4" fill="#fff"/><rect x="21" y="140" width="10" height="3" fill="url(#tubeg)"/><rect x="21" y="140" width="10" height="1" fill="#0a3c90"/><rect x="33" y="139" width="12" height="5" fill="#000"/><rect x="34" y="140" width="11" height="4" fill="#fff"/><rect x="34" y="140" width="10" height="3" fill="url(#tubeg)"/><rect x="34" y="140" width="10" height="1" fill="#0a3c90"/><rect x="46" y="139" width="12" height="5" fill="#000"/><rect x="47" y="140" width="11" height="4" fill="#fff"/><rect x="47" y="140" width="10" height="3" fill="url(#tubeg)"/><rect x="47" y="140" width="10" height="1" fill="#0a3c90"/><rect x="58" y="139" width="12" height="5" fill="#000"/><rect x="59" y="140" width="11" height="4" fill="#fff"/><rect x="59" y="140" width="10" height="3" fill="url(#tubeg)"/><rect x="59" y="140" width="10" height="1" fill="#0a3c90"/><rect x="71" y="139" width="12" height="5" fill="#000"/><rect x="72" y="140" width="11" height="4" fill="#fff"/><rect x="72" y="140" width="10" height="3" fill="url(#tubeg)"/><rect x="72" y="140" width="10" height="1" fill="#0a3c90"/><rect x="7" y="145" width="12" height="5" fill="#000"/><rect x="8" y="146" width="11" height="4" fill="#fff"/><rect x="8" y="146" width="10" height="3" fill="url(#tubeg)"/><rect x="8" y="146" width="10" height="1" fill="#0a3c90"/><rect x="20" y="145" width="12" height="5" fill="#000"/><rect x="21" y="146" width="11" height="4" fill="#fff"/><rect x="21" y="146" width="10" height="3" fill="url(#tubeg)"/><rect x="21" y="146" width="10" height="1" fill="#0a3c90"/><rect x="33" y="145" width="12" height="5" fill="#000"/><rect x="34" y="146" width="11" height="4" fill="#fff"/><rect x="34" y="146" width="10" height="3" fill="url(#tubeg)"/><rect x="34" y="146" width="10" height="1" fill="#0a3c90"/><rect x="46" y="145" width="12" height="5" fill="#000"/><rect x="47" y="146" width="11" height="4" fill="#fff"/><rect x="47" y="146" width="10" height="3" fill="url(#tubeg)"/><rect x="47" y="146" width="10" height="1" fill="#0a3c90"/><rect x="58" y="145" width="12" height="5" fill="#000"/><rect x="59" y="146" width="11" height="4" fill="#fff"/><rect x="59" y="146" width="10" height="3" fill="url(#tubeg)"/><rect x="59" y="146" width="10" height="1" fill="#0a3c90"/><rect x="71" y="145" width="12" height="5" fill="#000"/><rect x="72" y="146" width="11" height="4" fill="#fff"/><rect x="72" y="146" width="10" height="3" fill="url(#tubeg)"/><rect x="72" y="146" width="10" height="1" fill="#0a3c90"/><rect x="7" y="152" width="12" height="5" fill="#000"/><rect x="8" y="153" width="11" height="4" fill="#fff"/><rect x="8" y="153" width="10" height="3" fill="url(#tubeg)"/><rect x="8" y="153" width="10" height="1" fill="#0a3c90"/><rect x="20" y="152" width="12" height="5" fill="#000"/><rect x="21" y="153" width="11" height="4" fill="#fff"/><rect x="21" y="153" width="10" height="3" fill="url(#tubeg)"/><rect x="21" y="153" width="10" height="1" fill="#0a3c90"/><rect x="33" y="152" width="12" height="5" fill="#000"/><rect x="34" y="153" width="11" height="4" fill="#fff"/><rect x="34" y="153" width="10" height="3" fill="url(#tubeg)"/><rect x="34" y="153" width="10" height="1" fill="#0a3c90"/><rect x="46" y="152" width="12" height="5" fill="#000"/><rect x="47" y="153" width="11" height="4" fill="#fff"/><rect x="47" y="153" width="10" height="3" fill="url(#tubeg)"/><rect x="47" y="153" width="10" height="1" fill="#0a3c90"/><rect x="58" y="152" width="12" height="5" fill="#000"/><rect x="59" y="153" width="11" height="4" fill="#fff"/><rect x="59" y="153" width="10" height="3" fill="url(#tubeg)"/><rect x="59" y="153" width="10" height="1" fill="#0a3c90"/><rect x="71" y="152" width="12" height="5" fill="#000"/><rect x="72" y="153" width="11" height="4" fill="#fff"/><rect x="72" y="153" width="10" height="3" fill="url(#tubeg)"/><rect x="72" y="153" width="10" height="1" fill="#0a3c90"/><rect x="7" y="158" width="12" height="5" fill="#000"/><rect x="8" y="159" width="11" height="4" fill="#fff"/><rect x="8" y="159" width="10" height="3" fill="url(#tubeg)"/><rect x="8" y="159" width="10" height="1" fill="#0a3c90"/><rect x="20" y="158" width="12" height="5" fill="#000"/><rect x="21" y="159" width="11" height="4" fill="#fff"/><rect x="21" y="159" width="10" height="3" fill="url(#tubeg)"/><rect x="21" y="159" width="10" height="1" fill="#0a3c90"/><rect x="33" y="158" width="12" height="5" fill="#000"/><rect x="34" y="159" width="11" height="4" fill="#fff"/><rect x="34" y="159" width="10" height="3" fill="url(#tubeg)"/><rect x="34" y="159" width="10" height="1" fill="#0a3c90"/><rect x="46" y="158" width="12" height="5" fill="#000"/><rect x="47" y="159" width="11" height="4" fill="#fff"/><rect x="47" y="159" width="10" height="3" fill="url(#tubeg)"/><rect x="47" y="159" width="10" height="1" fill="#0a3c90"/><rect x="58" y="158" width="12" height="5" fill="#000"/><rect x="59" y="159" width="11" height="4" fill="#fff"/><rect x="59" y="159" width="10" height="3" fill="url(#tubeg)"/><rect x="59" y="159" width="10" height="1" fill="#0a3c90"/><rect x="71" y="158" width="12" height="5" fill="#000"/><rect x="72" y="159" width="11" height="4" fill="#fff"/><rect x="72" y="159" width="10" height="3" fill="url(#tubeg)"/><rect x="72" y="159" width="10" height="1" fill="#0a3c90"/><rect x="7" y="164" width="12" height="5" fill="#000"/><rect x="8" y="165" width="11" height="4" fill="#fff"/><rect x="8" y="165" width="10" height="3" fill="url(#tubeg)"/><rect x="8" y="165" width="10" height="1" fill="#0a3c90"/><rect x="20" y="164" width="12" height="5" fill="#000"/><rect x="21" y="165" width="11" height="4" fill="#fff"/><rect x="21" y="165" width="10" height="3" fill="url(#tubeg)"/><rect x="21" y="165" width="10" height="1" fill="#0a3c90"/><rect x="33" y="164" width="12" height="5" fill="#000"/><rect x="34" y="165" width="11" height="4" fill="#fff"/><rect x="34" y="165" width="10" height="3" fill="url(#tubeg)"/><rect x="34" y="165" width="10" height="1" fill="#0a3c90"/><rect x="46" y="164" width="12" height="5" fill="#000"/><rect x="47" y="165" width="11" height="4" fill="#fff"/><rect x="47" y="165" width="10" height="3" fill="url(#tubeg)"/><rect x="47" y="165" width="10" height="1" fill="#0a3c90"/><rect x="58" y="164" width="12" height="5" fill="#000"/><rect x="59" y="165" width="11" height="4" fill="#fff"/><rect x="59" y="165" width="10" height="3" fill="url(#tubeg)"/><rect x="59" y="165" width="10" height="1" fill="#0a3c90"/><rect x="71" y="164" width="12" height="5" fill="#000"/><rect x="72" y="165" width="11" height="4" fill="#fff"/><rect x="72" y="165" width="10" height="3" fill="url(#tubeg)"/><rect x="72" y="165" width="10" height="1" fill="#0a3c90"/><rect x="1" y="193" width="88" height="3" fill="#fbfbfb"/><rect x="1" y="196" width="89" height="89" fill="#101010"/><rect x="1" y="196" width="88" height="88" fill="#0080ff"/><rect x="7" y="213" width="12" height="5" fill="#000"/><rect x="8" y="214" width="11" height="4" fill="#fff"/><rect x="8" y="214" width="10" height="3" fill="url(#tubeg)"/><rect x="8" y="214" width="10" height="1" fill="#0a3c90"/><rect x="20" y="213" width="12" height="5" fill="#000"/><rect x="21" y="214" width="11" height="4" fill="#fff"/><rect x="21" y="214" width="10" height="3" fill="url(#tubeg)"/><rect x="21" y="214" width="10" height="1" fill="#0a3c90"/><rect x="33" y="213" width="12" height="5" fill="#000"/><rect x="34" y="214" width="11" height="4" fill="#fff"/><rect x="34" y="214" width="10" height="3" fill="url(#tubeg)"/><rect x="34" y="214" width="10" height="1" fill="#0a3c90"/><rect x="46" y="213" width="12" height="5" fill="#000"/><rect x="47" y="214" width="11" height="4" fill="#fff"/><rect x="47" y="214" width="10" height="3" fill="url(#tubeg)"/><rect x="47" y="214" width="10" height="1" fill="#0a3c90"/><rect x="58" y="213" width="12" height="5" fill="#000"/><rect x="59" y="214" width="11" height="4" fill="#fff"/><rect x="59" y="214" width="10" height="3" fill="url(#tubeg)"/><rect x="59" y="214" width="10" height="1" fill="#0a3c90"/><rect x="71" y="213" width="12" height="5" fill="#000"/><rect x="72" y="214" width="11" height="4" fill="#fff"/><rect x="72" y="214" width="10" height="3" fill="url(#tubeg)"/><rect x="72" y="214" width="10" height="1" fill="#0a3c90"/><rect x="7" y="219" width="12" height="5" fill="#000"/><rect x="8" y="220" width="11" height="4" fill="#fff"/><rect x="8" y="220" width="10" height="3" fill="url(#tubeg)"/><rect x="8" y="220" width="10" height="1" fill="#0a3c90"/><rect x="20" y="219" width="12" height="5" fill="#000"/><rect x="21" y="220" width="11" height="4" fill="#fff"/><rect x="21" y="220" width="10" height="3" fill="url(#tubeg)"/><rect x="21" y="220" width="10" height="1" fill="#0a3c90"/><rect x="33" y="219" width="12" height="5" fill="#000"/><rect x="34" y="220" width="11" height="4" fill="#fff"/><rect x="34" y="220" width="10" height="3" fill="url(#tubeg)"/><rect x="34" y="220" width="10" height="1" fill="#0a3c90"/><rect x="46" y="219" width="12" height="5" fill="#000"/><rect x="47" y="220" width="11" height="4" fill="#fff"/><rect x="47" y="220" width="10" height="3" fill="url(#tubeg)"/><rect x="47" y="220" width="10" height="1" fill="#0a3c90"/><rect x="58" y="219" width="12" height="5" fill="#000"/><rect x="59" y="220" width="11" height="4" fill="#fff"/><rect x="59" y="220" width="10" height="3" fill="url(#tubeg)"/><rect x="59" y="220" width="10" height="1" fill="#0a3c90"/><rect x="71" y="219" width="12" height="5" fill="#000"/><rect x="72" y="220" width="11" height="4" fill="#fff"/><rect x="72" y="220" width="10" height="3" fill="url(#tubeg)"/><rect x="72" y="220" width="10" height="1" fill="#0a3c90"/><rect x="7" y="226" width="12" height="5" fill="#000"/><rect x="8" y="227" width="11" height="4" fill="#fff"/><rect x="8" y="227" width="10" height="3" fill="url(#tubeg)"/><rect x="8" y="227" width="10" height="1" fill="#0a3c90"/><rect x="20" y="226" width="12" height="5" fill="#000"/><rect x="21" y="227" width="11" height="4" fill="#fff"/><rect x="21" y="227" width="10" height="3" fill="url(#tubeg)"/><rect x="21" y="227" width="10" height="1" fill="#0a3c90"/><rect x="33" y="226" width="12" height="5" fill="#000"/><rect x="34" y="227" width="11" height="4" fill="#fff"/><rect x="34" y="227" width="10" height="3" fill="url(#tubeg)"/><rect x="34" y="227" width="10" height="1" fill="#0a3c90"/><rect x="46" y="226" width="12" height="5" fill="#000"/><rect x="47" y="227" width="11" height="4" fill="#fff"/><rect x="47" y="227" width="10" height="3" fill="url(#tubeg)"/><rect x="47" y="227" width="10" height="1" fill="#0a3c90"/><rect x="58" y="226" width="12" height="5" fill="#000"/><rect x="59" y="227" width="11" height="4" fill="#fff"/><rect x="59" y="227" width="10" height="3" fill="url(#tubeg)"/><rect x="59" y="227" width="10" height="1" fill="#0a3c90"/><rect x="71" y="226" width="12" height="5" fill="#000"/><rect x="72" y="227" width="11" height="4" fill="#fff"/><rect x="72" y="227" width="10" height="3" fill="url(#tubeg)"/><rect x="72" y="227" width="10" height="1" fill="#0a3c90"/><rect x="7" y="232" width="12" height="5" fill="#000"/><rect x="8" y="233" width="11" height="4" fill="#fff"/><rect x="8" y="233" width="10" height="3" fill="url(#tubeg)"/><rect x="8" y="233" width="10" height="1" fill="#0a3c90"/><rect x="20" y="232" width="12" height="5" fill="#000"/><rect x="21" y="233" width="11" height="4" fill="#fff"/><rect x="21" y="233" width="10" height="3" fill="url(#tubeg)"/><rect x="21" y="233" width="10" height="1" fill="#0a3c90"/><rect x="33" y="232" width="12" height="5" fill="#000"/><rect x="34" y="233" width="11" height="4" fill="#fff"/><rect x="34" y="233" width="10" height="3" fill="url(#tubeg)"/><rect x="34" y="233" width="10" height="1" fill="#0a3c90"/><rect x="46" y="232" width="12" height="5" fill="#000"/><rect x="47" y="233" width="11" height="4" fill="#fff"/><rect x="47" y="233" width="10" height="3" fill="url(#tubeg)"/><rect x="47" y="233" width="10" height="1" fill="#0a3c90"/><rect x="58" y="232" width="12" height="5" fill="#000"/><rect x="59" y="233" width="11" height="4" fill="#fff"/><rect x="59" y="233" width="10" height="3" fill="url(#tubeg)"/><rect x="59" y="233" width="10" height="1" fill="#0a3c90"/><rect x="71" y="232" width="12" height="5" fill="#000"/><rect x="72" y="233" width="11" height="4" fill="#fff"/><rect x="72" y="233" width="10" height="3" fill="url(#tubeg)"/><rect x="72" y="233" width="10" height="1" fill="#0a3c90"/><rect x="7" y="238" width="12" height="5" fill="#000"/><rect x="8" y="239" width="11" height="4" fill="#fff"/><rect x="8" y="239" width="10" height="3" fill="url(#tubeg)"/><rect x="8" y="239" width="10" height="1" fill="#0a3c90"/><rect x="20" y="238" width="12" height="5" fill="#000"/><rect x="21" y="239" width="11" height="4" fill="#fff"/><rect x="21" y="239" width="10" height="3" fill="url(#tubeg)"/><rect x="21" y="239" width="10" height="1" fill="#0a3c90"/><rect x="33" y="238" width="12" height="5" fill="#000"/><rect x="34" y="239" width="11" height="4" fill="#fff"/><rect x="34" y="239" width="10" height="3" fill="url(#tubeg)"/><rect x="34" y="239" width="10" height="1" fill="#0a3c90"/><rect x="46" y="238" width="12" height="5" fill="#000"/><rect x="47" y="239" width="11" height="4" fill="#fff"/><rect x="47" y="239" width="10" height="3" fill="url(#tubeg)"/><rect x="47" y="239" width="10" height="1" fill="#0a3c90"/><rect x="58" y="238" width="12" height="5" fill="#000"/><rect x="59" y="239" width="11" height="4" fill="#fff"/><rect x="59" y="239" width="10" height="3" fill="url(#tubeg)"/><rect x="59" y="239" width="10" height="1" fill="#0a3c90"/><rect x="71" y="238" width="12" height="5" fill="#000"/><rect x="72" y="239" width="11" height="4" fill="#fff"/><rect x="72" y="239" width="10" height="3" fill="url(#tubeg)"/><rect x="72" y="239" width="10" height="1" fill="#0a3c90"/><rect x="7" y="245" width="12" height="5" fill="#000"/><rect x="8" y="246" width="11" height="4" fill="#fff"/><rect x="8" y="246" width="10" height="3" fill="url(#tubeg)"/><rect x="8" y="246" width="10" height="1" fill="#0a3c90"/><rect x="20" y="245" width="12" height="5" fill="#000"/><rect x="21" y="246" width="11" height="4" fill="#fff"/><rect x="21" y="246" width="10" height="3" fill="url(#tubeg)"/><rect x="21" y="246" width="10" height="1" fill="#0a3c90"/><rect x="33" y="245" width="12" height="5" fill="#000"/><rect x="34" y="246" width="11" height="4" fill="#fff"/><rect x="34" y="246" width="10" height="3" fill="url(#tubeg)"/><rect x="34" y="246" width="10" height="1" fill="#0a3c90"/><rect x="46" y="245" width="12" height="5" fill="#000"/><rect x="47" y="246" width="11" height="4" fill="#fff"/><rect x="47" y="246" width="10" height="3" fill="url(#tubeg)"/><rect x="47" y="246" width="10" height="1" fill="#0a3c90"/><rect x="58" y="245" width="12" height="5" fill="#000"/><rect x="59" y="246" width="11" height="4" fill="#fff"/><rect x="59" y="246" width="10" height="3" fill="url(#tubeg)"/><rect x="59" y="246" width="10" height="1" fill="#0a3c90"/><rect x="71" y="245" width="12" height="5" fill="#000"/><rect x="72" y="246" width="11" height="4" fill="#fff"/><rect x="72" y="246" width="10" height="3" fill="url(#tubeg)"/><rect x="72" y="246" width="10" height="1" fill="#0a3c90"/><rect x="7" y="251" width="12" height="5" fill="#000"/><rect x="8" y="252" width="11" height="4" fill="#fff"/><rect x="8" y="252" width="10" height="3" fill="url(#tubeg)"/><rect x="8" y="252" width="10" height="1" fill="#0a3c90"/><rect x="20" y="251" width="12" height="5" fill="#000"/><rect x="21" y="252" width="11" height="4" fill="#fff"/><rect x="21" y="252" width="10" height="3" fill="url(#tubeg)"/><rect x="21" y="252" width="10" height="1" fill="#0a3c90"/><rect x="33" y="251" width="12" height="5" fill="#000"/><rect x="34" y="252" width="11" height="4" fill="#fff"/><rect x="34" y="252" width="10" height="3" fill="url(#tubeg)"/><rect x="34" y="252" width="10" height="1" fill="#0a3c90"/><rect x="46" y="251" width="12" height="5" fill="#000"/><rect x="47" y="252" width="11" height="4" fill="#fff"/><rect x="47" y="252" width="10" height="3" fill="url(#tubeg)"/><rect x="47" y="252" width="10" height="1" fill="#0a3c90"/><rect x="58" y="251" width="12" height="5" fill="#000"/><rect x="59" y="252" width="11" height="4" fill="#fff"/><rect x="59" y="252" width="10" height="3" fill="url(#tubeg)"/><rect x="59" y="252" width="10" height="1" fill="#0a3c90"/><rect x="71" y="251" width="12" height="5" fill="#000"/><rect x="72" y="252" width="11" height="4" fill="#fff"/><rect x="72" y="252" width="10" height="3" fill="url(#tubeg)"/><rect x="72" y="252" width="10" height="1" fill="#0a3c90"/><rect x="7" y="257" width="12" height="5" fill="#000"/><rect x="8" y="258" width="11" height="4" fill="#fff"/><rect x="8" y="258" width="10" height="3" fill="url(#tubeg)"/><rect x="8" y="258" width="10" height="1" fill="#0a3c90"/><rect x="20" y="257" width="12" height="5" fill="#000"/><rect x="21" y="258" width="11" height="4" fill="#fff"/><rect x="21" y="258" width="10" height="3" fill="url(#tubeg)"/><rect x="21" y="258" width="10" height="1" fill="#0a3c90"/><rect x="33" y="257" width="12" height="5" fill="#000"/><rect x="34" y="258" width="11" height="4" fill="#fff"/><rect x="34" y="258" width="10" height="3" fill="url(#tubeg)"/><rect x="34" y="258" width="10" height="1" fill="#0a3c90"/><rect x="46" y="257" width="12" height="5" fill="#000"/><rect x="47" y="258" width="11" height="4" fill="#fff"/><rect x="47" y="258" width="10" height="3" fill="url(#tubeg)"/><rect x="47" y="258" width="10" height="1" fill="#0a3c90"/><rect x="58" y="257" width="12" height="5" fill="#000"/><rect x="59" y="258" width="11" height="4" fill="#fff"/><rect x="59" y="258" width="10" height="3" fill="url(#tubeg)"/><rect x="59" y="258" width="10" height="1" fill="#0a3c90"/><rect x="71" y="257" width="12" height="5" fill="#000"/><rect x="72" y="258" width="11" height="4" fill="#fff"/><rect x="72" y="258" width="10" height="3" fill="url(#tubeg)"/><rect x="72" y="258" width="10" height="1" fill="#0a3c90"/></svg><svg class="a" style="left:670px;top:159px" width="90" height="295"><rect x="0" y="0" width="90" height="295" fill="#f2f2f2"/><rect x="1" y="1" width="89" height="294" fill="#101010"/><rect x="1" y="1" width="88" height="293" fill="#d3d3d3"/><rect x="1" y="11" width="88" height="1" fill="#f6f6f6"/><rect x="1" y="12" width="89" height="88" fill="#101010"/><rect x="1" y="12" width="88" height="87" fill="#0077c8"/><g fill="none" stroke="url(#wellg2)" stroke-width="1"><circle cx="20.5" cy="15.8" r="3"/><circle cx="30.3" cy="15.8" r="3"/><circle cx="40.1" cy="15.8" r="3"/><circle cx="49.9" cy="15.8" r="3"/><circle cx="59.7" cy="15.8" r="3"/><circle cx="69.5" cy="15.8" r="3"/><circle cx="20.5" cy="26.65" r="3"/><circle cx="30.3" cy="26.65" r="3"/><circle cx="40.1" cy="26.65" r="3"/><circle cx="49.9" cy="26.65" r="3"/><circle cx="59.7" cy="26.65" r="3"/><circle cx="69.5" cy="26.65" r="3"/><circle cx="20.5" cy="37.5" r="3"/><circle cx="30.3" cy="37.5" r="3"/><circle cx="40.1" cy="37.5" r="3"/><circle cx="49.9" cy="37.5" r="3"/><circle cx="59.7" cy="37.5" r="3"/><circle cx="69.5" cy="37.5" r="3"/><circle cx="20.5" cy="48.35" r="3"/><circle cx="30.3" cy="48.35" r="3"/><circle cx="40.1" cy="48.35" r="3"/><circle cx="49.9" cy="48.35" r="3"/><circle cx="59.7" cy="48.35" r="3"/><circle cx="69.5" cy="48.35" r="3"/><circle cx="20.5" cy="59.2" r="3"/><circle cx="30.3" cy="59.2" r="3"/><circle cx="40.1" cy="59.2" r="3"/><circle cx="49.9" cy="59.2" r="3"/><circle cx="59.7" cy="59.2" r="3"/><circle cx="69.5" cy="59.2" r="3"/><circle cx="20.5" cy="70.05" r="3"/><circle cx="30.3" cy="70.05" r="3"/><circle cx="40.1" cy="70.05" r="3"/><circle cx="49.9" cy="70.05" r="3"/><circle cx="59.7" cy="70.05" r="3"/><circle cx="69.5" cy="70.05" r="3"/><circle cx="20.5" cy="80.9" r="3"/><circle cx="30.3" cy="80.9" r="3"/><circle cx="40.1" cy="80.9" r="3"/><circle cx="49.9" cy="80.9" r="3"/><circle cx="59.7" cy="80.9" r="3"/><circle cx="69.5" cy="80.9" r="3"/><circle cx="20.5" cy="91.75" r="3"/><circle cx="30.3" cy="91.75" r="3"/><circle cx="40.1" cy="91.75" r="3"/><circle cx="49.9" cy="91.75" r="3"/><circle cx="59.7" cy="91.75" r="3"/><circle cx="69.5" cy="91.75" r="3"/></g><rect x="1" y="101" width="88" height="3" fill="#fbfbfb"/><rect x="1" y="104" width="89" height="88" fill="#101010"/><rect x="1" y="104" width="88" height="87" fill="#0077c8"/><g fill="none" stroke="url(#wellg2)" stroke-width="1"><circle cx="20.5" cy="107.8" r="3"/><circle cx="30.3" cy="107.8" r="3"/><circle cx="40.1" cy="107.8" r="3"/><circle cx="49.9" cy="107.8" r="3"/><circle cx="59.7" cy="107.8" r="3"/><circle cx="69.5" cy="107.8" r="3"/><circle cx="20.5" cy="118.65" r="3"/><circle cx="30.3" cy="118.65" r="3"/><circle cx="40.1" cy="118.65" r="3"/><circle cx="49.9" cy="118.65" r="3"/><circle cx="59.7" cy="118.65" r="3"/><circle cx="69.5" cy="118.65" r="3"/><circle cx="20.5" cy="129.5" r="3"/><circle cx="30.3" cy="129.5" r="3"/><circle cx="40.1" cy="129.5" r="3"/><circle cx="49.9" cy="129.5" r="3"/><circle cx="59.7" cy="129.5" r="3"/><circle cx="69.5" cy="129.5" r="3"/><circle cx="20.5" cy="140.35" r="3"/><circle cx="30.3" cy="140.35" r="3"/><circle cx="40.1" cy="140.35" r="3"/><circle cx="49.9" cy="140.35" r="3"/><circle cx="59.7" cy="140.35" r="3"/><circle cx="69.5" cy="140.35" r="3"/><circle cx="20.5" cy="151.2" r="3"/><circle cx="30.3" cy="151.2" r="3"/><circle cx="40.1" cy="151.2" r="3"/><circle cx="49.9" cy="151.2" r="3"/><circle cx="59.7" cy="151.2" r="3"/><circle cx="69.5" cy="151.2" r="3"/><circle cx="20.5" cy="162.05" r="3"/><circle cx="30.3" cy="162.05" r="3"/><circle cx="40.1" cy="162.05" r="3"/><circle cx="49.9" cy="162.05" r="3"/><circle cx="59.7" cy="162.05" r="3"/><circle cx="69.5" cy="162.05" r="3"/><circle cx="20.5" cy="172.9" r="3"/><circle cx="30.3" cy="172.9" r="3"/><circle cx="40.1" cy="172.9" r="3"/><circle cx="49.9" cy="172.9" r="3"/><circle cx="59.7" cy="172.9" r="3"/><circle cx="69.5" cy="172.9" r="3"/><circle cx="20.5" cy="183.75" r="3"/><circle cx="30.3" cy="183.75" r="3"/><circle cx="40.1" cy="183.75" r="3"/><circle cx="49.9" cy="183.75" r="3"/><circle cx="59.7" cy="183.75" r="3"/><circle cx="69.5" cy="183.75" r="3"/></g><rect x="1" y="193" width="88" height="3" fill="#fbfbfb"/><rect x="1" y="196" width="89" height="88" fill="#101010"/><rect x="1" y="196" width="88" height="87" fill="#0077c8"/><g fill="none" stroke="url(#wellg2)" stroke-width="1"><circle cx="20.5" cy="199.8" r="3"/><circle cx="30.3" cy="199.8" r="3"/><circle cx="40.1" cy="199.8" r="3"/><circle cx="49.9" cy="199.8" r="3"/><circle cx="59.7" cy="199.8" r="3"/><circle cx="69.5" cy="199.8" r="3"/><circle cx="20.5" cy="210.65" r="3"/><circle cx="30.3" cy="210.65" r="3"/><circle cx="40.1" cy="210.65" r="3"/><circle cx="49.9" cy="210.65" r="3"/><circle cx="59.7" cy="210.65" r="3"/><circle cx="69.5" cy="210.65" r="3"/><circle cx="20.5" cy="221.5" r="3"/><circle cx="30.3" cy="221.5" r="3"/><circle cx="40.1" cy="221.5" r="3"/><circle cx="49.9" cy="221.5" r="3"/><circle cx="59.7" cy="221.5" r="3"/><circle cx="69.5" cy="221.5" r="3"/><circle cx="20.5" cy="232.35" r="3"/><circle cx="30.3" cy="232.35" r="3"/><circle cx="40.1" cy="232.35" r="3"/><circle cx="49.9" cy="232.35" r="3"/><circle cx="59.7" cy="232.35" r="3"/><circle cx="69.5" cy="232.35" r="3"/><circle cx="20.5" cy="243.2" r="3"/><circle cx="30.3" cy="243.2" r="3"/><circle cx="40.1" cy="243.2" r="3"/><circle cx="49.9" cy="243.2" r="3"/><circle cx="59.7" cy="243.2" r="3"/><circle cx="69.5" cy="243.2" r="3"/><circle cx="20.5" cy="254.05" r="3"/><circle cx="30.3" cy="254.05" r="3"/><circle cx="40.1" cy="254.05" r="3"/><circle cx="49.9" cy="254.05" r="3"/><circle cx="59.7" cy="254.05" r="3"/><circle cx="69.5" cy="254.05" r="3"/><circle cx="20.5" cy="264.9" r="3"/><circle cx="30.3" cy="264.9" r="3"/><circle cx="40.1" cy="264.9" r="3"/><circle cx="49.9" cy="264.9" r="3"/><circle cx="59.7" cy="264.9" r="3"/><circle cx="69.5" cy="264.9" r="3"/><circle cx="20.5" cy="275.75" r="3"/><circle cx="30.3" cy="275.75" r="3"/><circle cx="40.1" cy="275.75" r="3"/><circle cx="49.9" cy="275.75" r="3"/><circle cx="59.7" cy="275.75" r="3"/><circle cx="69.5" cy="275.75" r="3"/></g></svg><svg class="a" style="left:769px;top:159px" width="90" height="295"><rect x="0" y="0" width="90" height="295" fill="#f2f2f2"/><rect x="1" y="1" width="89" height="294" fill="#101010"/><rect x="1" y="1" width="88" height="293" fill="#d3d3d3"/><rect x="1" y="11" width="88" height="1" fill="#f6f6f6"/><rect x="1" y="12" width="89" height="88" fill="#101010"/><rect x="1" y="12" width="88" height="87" fill="#0077c8"/><g fill="none" stroke="url(#wellg2)" stroke-width="1"><circle cx="20.5" cy="15.8" r="3"/><circle cx="30.3" cy="15.8" r="3"/><circle cx="40.1" cy="15.8" r="3"/><circle cx="49.9" cy="15.8" r="3"/><circle cx="59.7" cy="15.8" r="3"/><circle cx="69.5" cy="15.8" r="3"/><circle cx="20.5" cy="26.65" r="3"/><circle cx="30.3" cy="26.65" r="3"/><circle cx="40.1" cy="26.65" r="3"/><circle cx="49.9" cy="26.65" r="3"/><circle cx="59.7" cy="26.65" r="3"/><circle cx="69.5" cy="26.65" r="3"/><circle cx="20.5" cy="37.5" r="3"/><circle cx="30.3" cy="37.5" r="3"/><circle cx="40.1" cy="37.5" r="3"/><circle cx="49.9" cy="37.5" r="3"/><circle cx="59.7" cy="37.5" r="3"/><circle cx="69.5" cy="37.5" r="3"/><circle cx="20.5" cy="48.35" r="3"/><circle cx="30.3" cy="48.35" r="3"/><circle cx="40.1" cy="48.35" r="3"/><circle cx="49.9" cy="48.35" r="3"/><circle cx="59.7" cy="48.35" r="3"/><circle cx="69.5" cy="48.35" r="3"/><circle cx="20.5" cy="59.2" r="3"/><circle cx="30.3" cy="59.2" r="3"/><circle cx="40.1" cy="59.2" r="3"/><circle cx="49.9" cy="59.2" r="3"/><circle cx="59.7" cy="59.2" r="3"/><circle cx="69.5" cy="59.2" r="3"/><circle cx="20.5" cy="70.05" r="3"/><circle cx="30.3" cy="70.05" r="3"/><circle cx="40.1" cy="70.05" r="3"/><circle cx="49.9" cy="70.05" r="3"/><circle cx="59.7" cy="70.05" r="3"/><circle cx="69.5" cy="70.05" r="3"/><circle cx="20.5" cy="80.9" r="3"/><circle cx="30.3" cy="80.9" r="3"/><circle cx="40.1" cy="80.9" r="3"/><circle cx="49.9" cy="80.9" r="3"/><circle cx="59.7" cy="80.9" r="3"/><circle cx="69.5" cy="80.9" r="3"/><circle cx="20.5" cy="91.75" r="3"/><circle cx="30.3" cy="91.75" r="3"/><circle cx="40.1" cy="91.75" r="3"/><circle cx="49.9" cy="91.75" r="3"/><circle cx="59.7" cy="91.75" r="3"/><circle cx="69.5" cy="91.75" r="3"/></g><rect x="1" y="101" width="88" height="3" fill="#fbfbfb"/><rect x="1" y="104" width="89" height="88" fill="#101010"/><rect x="1" y="104" width="88" height="87" fill="#0077c8"/><g fill="none" stroke="url(#wellg2)" stroke-width="1"><circle cx="20.5" cy="107.8" r="3"/><circle cx="30.3" cy="107.8" r="3"/><circle cx="40.1" cy="107.8" r="3"/><circle cx="49.9" cy="107.8" r="3"/><circle cx="59.7" cy="107.8" r="3"/><circle cx="69.5" cy="107.8" r="3"/><circle cx="20.5" cy="118.65" r="3"/><circle cx="30.3" cy="118.65" r="3"/><circle cx="40.1" cy="118.65" r="3"/><circle cx="49.9" cy="118.65" r="3"/><circle cx="59.7" cy="118.65" r="3"/><circle cx="69.5" cy="118.65" r="3"/><circle cx="20.5" cy="129.5" r="3"/><circle cx="30.3" cy="129.5" r="3"/><circle cx="40.1" cy="129.5" r="3"/><circle cx="49.9" cy="129.5" r="3"/><circle cx="59.7" cy="129.5" r="3"/><circle cx="69.5" cy="129.5" r="3"/><circle cx="20.5" cy="140.35" r="3"/><circle cx="30.3" cy="140.35" r="3"/><circle cx="40.1" cy="140.35" r="3"/><circle cx="49.9" cy="140.35" r="3"/><circle cx="59.7" cy="140.35" r="3"/><circle cx="69.5" cy="140.35" r="3"/><circle cx="20.5" cy="151.2" r="3"/><circle cx="30.3" cy="151.2" r="3"/><circle cx="40.1" cy="151.2" r="3"/><circle cx="49.9" cy="151.2" r="3"/><circle cx="59.7" cy="151.2" r="3"/><circle cx="69.5" cy="151.2" r="3"/><circle cx="20.5" cy="162.05" r="3"/><circle cx="30.3" cy="162.05" r="3"/><circle cx="40.1" cy="162.05" r="3"/><circle cx="49.9" cy="162.05" r="3"/><circle cx="59.7" cy="162.05" r="3"/><circle cx="69.5" cy="162.05" r="3"/><circle cx="20.5" cy="172.9" r="3"/><circle cx="30.3" cy="172.9" r="3"/><circle cx="40.1" cy="172.9" r="3"/><circle cx="49.9" cy="172.9" r="3"/><circle cx="59.7" cy="172.9" r="3"/><circle cx="69.5" cy="172.9" r="3"/><circle cx="20.5" cy="183.75" r="3"/><circle cx="30.3" cy="183.75" r="3"/><circle cx="40.1" cy="183.75" r="3"/><circle cx="49.9" cy="183.75" r="3"/><circle cx="59.7" cy="183.75" r="3"/><circle cx="69.5" cy="183.75" r="3"/></g><rect x="1" y="193" width="88" height="3" fill="#fbfbfb"/><rect x="1" y="196" width="89" height="88" fill="#101010"/><rect x="1" y="196" width="88" height="87" fill="#0077c8"/><g fill="none" stroke="url(#wellg2)" stroke-width="1"><circle cx="20.5" cy="199.8" r="3"/><circle cx="30.3" cy="199.8" r="3"/><circle cx="40.1" cy="199.8" r="3"/><circle cx="49.9" cy="199.8" r="3"/><circle cx="59.7" cy="199.8" r="3"/><circle cx="69.5" cy="199.8" r="3"/><circle cx="20.5" cy="210.65" r="3"/><circle cx="30.3" cy="210.65" r="3"/><circle cx="40.1" cy="210.65" r="3"/><circle cx="49.9" cy="210.65" r="3"/><circle cx="59.7" cy="210.65" r="3"/><circle cx="69.5" cy="210.65" r="3"/><circle cx="20.5" cy="221.5" r="3"/><circle cx="30.3" cy="221.5" r="3"/><circle cx="40.1" cy="221.5" r="3"/><circle cx="49.9" cy="221.5" r="3"/><circle cx="59.7" cy="221.5" r="3"/><circle cx="69.5" cy="221.5" r="3"/><circle cx="20.5" cy="232.35" r="3"/><circle cx="30.3" cy="232.35" r="3"/><circle cx="40.1" cy="232.35" r="3"/><circle cx="49.9" cy="232.35" r="3"/><circle cx="59.7" cy="232.35" r="3"/><circle cx="69.5" cy="232.35" r="3"/><circle cx="20.5" cy="243.2" r="3"/><circle cx="30.3" cy="243.2" r="3"/><circle cx="40.1" cy="243.2" r="3"/><circle cx="49.9" cy="243.2" r="3"/><circle cx="59.7" cy="243.2" r="3"/><circle cx="69.5" cy="243.2" r="3"/><circle cx="20.5" cy="254.05" r="3"/><circle cx="30.3" cy="254.05" r="3"/><circle cx="40.1" cy="254.05" r="3"/><circle cx="49.9" cy="254.05" r="3"/><circle cx="59.7" cy="254.05" r="3"/><circle cx="69.5" cy="254.05" r="3"/><circle cx="20.5" cy="264.9" r="3"/><circle cx="30.3" cy="264.9" r="3"/><circle cx="40.1" cy="264.9" r="3"/><circle cx="49.9" cy="264.9" r="3"/><circle cx="59.7" cy="264.9" r="3"/><circle cx="69.5" cy="264.9" r="3"/><circle cx="20.5" cy="275.75" r="3"/><circle cx="30.3" cy="275.75" r="3"/><circle cx="40.1" cy="275.75" r="3"/><circle cx="49.9" cy="275.75" r="3"/><circle cx="59.7" cy="275.75" r="3"/><circle cx="69.5" cy="275.75" r="3"/></g></svg><svg class="a" style="left:877px;top:159px" width="120" height="289"><rect x="0" y="0" width="120" height="289" fill="#f2f2f2"/><rect x="1" y="1" width="119" height="288" fill="#202020"/><rect x="1" y="1" width="118" height="287" fill="#d3d3d3"/><rect x="4" y="4" width="56" height="56" fill="#1e1e1e"/><rect x="4" y="4" width="55" height="55" fill="#f0f0f0"/><rect x="5" y="5" width="54" height="54" fill="#00f77e"/><circle cx="35" cy="34" r="23.5" fill="none" stroke="url(#resg)" stroke-width="1"/><rect x="60" y="4" width="56" height="56" fill="#1e1e1e"/><rect x="60" y="4" width="55" height="55" fill="#f0f0f0"/><rect x="61" y="5" width="54" height="54" fill="#00f77e"/><circle cx="91" cy="34" r="23.5" fill="none" stroke="url(#resg)" stroke-width="1"/><rect x="4" y="60" width="56" height="56" fill="#1e1e1e"/><rect x="4" y="60" width="55" height="55" fill="#f0f0f0"/><rect x="5" y="61" width="54" height="54" fill="#00f77e"/><circle cx="35" cy="90" r="23.5" fill="none" stroke="url(#resg)" stroke-width="1"/><rect x="60" y="60" width="56" height="56" fill="#1e1e1e"/><rect x="60" y="60" width="55" height="55" fill="#f0f0f0"/><rect x="61" y="61" width="54" height="54" fill="#00f77e"/><circle cx="91" cy="90" r="23.5" fill="none" stroke="url(#resg)" stroke-width="1"/><rect x="4" y="116" width="56" height="56" fill="#1e1e1e"/><rect x="4" y="116" width="55" height="55" fill="#f0f0f0"/><rect x="5" y="117" width="54" height="54" fill="#00f77e"/><circle cx="35" cy="146" r="23.5" fill="none" stroke="url(#resg)" stroke-width="1"/><rect x="60" y="116" width="56" height="56" fill="#1e1e1e"/><rect x="60" y="116" width="55" height="55" fill="#f0f0f0"/><rect x="61" y="117" width="54" height="54" fill="#00f77e"/><circle cx="91" cy="146" r="23.5" fill="none" stroke="url(#resg)" stroke-width="1"/><rect x="4" y="172" width="56" height="56" fill="#1e1e1e"/><rect x="4" y="172" width="55" height="55" fill="#f0f0f0"/><rect x="5" y="173" width="54" height="54" fill="#00f77e"/><circle cx="35" cy="202" r="23.5" fill="none" stroke="url(#resg)" stroke-width="1"/><rect x="60" y="172" width="56" height="56" fill="#1e1e1e"/><rect x="60" y="172" width="55" height="55" fill="#f0f0f0"/><rect x="61" y="173" width="54" height="54" fill="#00f77e"/><circle cx="91" cy="202" r="23.5" fill="none" stroke="url(#resg)" stroke-width="1"/><rect x="4" y="228" width="56" height="56" fill="#1e1e1e"/><rect x="4" y="228" width="55" height="55" fill="#f0f0f0"/><rect x="5" y="229" width="54" height="54" fill="#00f77e"/><circle cx="35" cy="258" r="23.5" fill="none" stroke="url(#resg)" stroke-width="1"/><rect x="60" y="228" width="56" height="56" fill="#1e1e1e"/><rect x="60" y="228" width="55" height="55" fill="#f0f0f0"/><rect x="61" y="229" width="54" height="54" fill="#00f77e"/><circle cx="91" cy="258" r="23.5" fill="none" stroke="url(#resg)" stroke-width="1"/></svg>

<!-- STEUERUNG -->
<div class="a" style="left:1078px;top:65px;width:298px;height:485px;background:#fff"></div>
<!-- steuerung frame -->
<div class="vl" style="left:1078px;top:65px;height:485px;background:#5f626b"></div>
<div class="hl" style="left:1078px;top:65px;width:76px;background:#7d8089"></div>
<div class="vl" style="left:1153px;top:65px;height:24px;background:#5f626b"></div>
<div class="hl" style="left:1153px;top:88px;width:222px;height:2px;background:#6d7079"></div>
<div class="hl" style="left:1078px;top:549px;width:298px;background:#4d5059"></div>
<div class="a" style="left:1375px;top:66px;width:1px;height:1000px;background:#000"></div>
<div class="tt" style="left:1086px;top:70px;font-size:12.5px;color:#000;letter-spacing:0.35px">Steuerung</div>

<div class="a" style="left:1087px;top:109px;width:169px;height:90px;background:#ff0000;display:flex;align-items:center;justify-content:center;text-align:center;font-weight:bold;font-size:22.5px;line-height:28px;color:#000">Exhaust<br>Leakage</div>
<div class="a" style="left:1087px;top:210px;width:169px;height:53px;background:#55f74b;display:flex;align-items:center;justify-content:center;font-weight:bold;font-size:22.5px;color:#000">Waste</div>
<div class="a" style="left:1087px;top:265px;width:169px;height:77px;background:#55f74b;display:flex;align-items:center;justify-content:center;font-weight:bold;font-size:22.5px;color:#000">Door closed</div>

<div class="btn" style="left:1268px;top:107px;width:108px;height:222px;font-size:14.3px;line-height:18px;padding-bottom:1px">Show<br>occupancy</div>
<div class="btn" style="left:1088px;top:347px;width:168px;height:80px;font-size:14.5px">Init System</div>
<div class="g" style="left:1263px;top:348px;width:53px;height:79px"></div>
<div class="btn" style="left:1088px;top:451px;width:204px;height:80px;font-size:14.5px">Stop/Pause</div>


<!-- BOTTOM -->
<!-- bottom frame lines -->
<div class="hl" style="left:0;top:550px;width:1078px;background:#3a3d45"></div>
<div class="a" style="left:0;top:1061px;width:1376px;height:1px;background:#5a5a5a"></div>
<div class="a" style="left:0;top:1062px;width:1375px;height:4px;background:#f2f1ef"></div>

<!-- WORKLIST -->
<div class="vl" style="left:0;top:551px;height:509px"></div>
<div class="vl" style="left:76px;top:551px;height:25px"></div>
<div class="hl" style="left:76px;top:575px;width:214px;height:2px"></div>
<div class="vl" style="left:288px;top:575px;height:485px;width:2px"></div>
<div class="hl" style="left:0;top:1058px;width:290px;height:2px"></div>
<div class="tt" style="left:16px;top:561px;font-weight:bold;font-size:13px;letter-spacing:-0.2px">Worklist</div>

<div class="btn r5" style="left:9px;top:586px;width:194px;height:79px;font-size:14.5px">Choose Worklist</div>
<div class="g" style="left:215px;top:585px;width:59px;height:81px"></div>
<div class="btn r5" style="left:9px;top:676px;width:194px;height:82px;font-size:14.5px">End after this Step</div>
<div class="a" style="left:9px;top:774px;width:271px;height:76px;border:1px solid #9a9a9a;background:#fff"></div>
<div class="tt" style="left:26px;top:781px;font-size:14.5px">Worklist Name</div>
<div class="btn r5" style="left:9px;top:855px;width:194px;height:164px;font-size:18.7px;font-weight:bold">Start Worklist</div>
<div class="g" style="left:215px;top:857px;width:59px;height:158px"></div>

<!-- CLEAN -->
<div class="vl" style="left:292px;top:551px;height:509px"></div>
<div class="vl" style="left:358px;top:551px;height:25px"></div>
<div class="hl" style="left:358px;top:575px;width:243px;height:2px"></div>
<div class="vl" style="left:599px;top:575px;height:485px;width:2px"></div>
<div class="hl" style="left:292px;top:1058px;width:309px;height:2px"></div>
<div class="tt" style="left:309px;top:561px;font-weight:bold;font-size:13px;letter-spacing:-0.2px">Clean</div>

<div class="btn r5" style="left:322px;top:586px;width:109px;height:43px;font-size:14.3px">Channel 1</div>
<div class="g" style="left:438px;top:586px;width:53px;height:53px"></div>
<div class="btn r5" style="left:322px;top:639px;width:109px;height:44px;font-size:14.3px">Channel 2</div>
<div class="gr" style="left:438px;top:640px;width:53px;height:53px"></div>
<div class="btn r5" style="left:323px;top:693px;width:109px;height:43px;font-size:14.3px">Channel 3</div>
<div class="gr" style="left:438px;top:693px;width:53px;height:54px"></div>
<div class="btn r5" style="left:323px;top:747px;width:109px;height:43px;font-size:14.3px">Channel 4</div>
<div class="gr" style="left:438px;top:747px;width:53px;height:44px"></div>
<div class="btn" style="left:323px;top:818px;width:254px;height:55px;font-size:14.5px">Cleaning Options</div>
<div class="btn" style="left:323px;top:883px;width:195px;height:81px;font-size:14.5px">Start cleaning</div>
<div class="g" style="left:523px;top:884px;width:52px;height:78px"></div>

<!-- STIRR -->
<div class="vl" style="left:603px;top:551px;height:509px"></div>
<div class="vl" style="left:661px;top:551px;height:25px"></div>
<div class="hl" style="left:661px;top:575px;width:178px;height:2px"></div>
<div class="vl" style="left:837px;top:575px;height:485px;width:2px"></div>
<div class="hl" style="left:603px;top:1058px;width:236px;height:2px"></div>
<div class="tt" style="left:621px;top:561px;font-weight:bold;font-size:13px;letter-spacing:-0.2px">Stirr</div>

<div class="btn" style="left:613px;top:608px;width:161px;height:66px;font-size:14.5px">Start Mixer 96 left</div>
<div class="g" style="left:780px;top:608px;width:32px;height:79px"></div>
<div class="btn" style="left:613px;top:716px;width:161px;height:66px;font-size:14.5px">Start Mixer 96 right</div>
<div class="g" style="left:780px;top:716px;width:32px;height:79px"></div>
<div class="btn" style="left:613px;top:824px;width:161px;height:66px;font-size:14.5px">Start Mixer Supply</div>
<div class="g" style="left:780px;top:824px;width:32px;height:79px"></div>
<div class="btn" style="left:613px;top:927px;width:204px;height:81px;font-size:14.5px">Stop Stirrers</div>

<style>.st{position:absolute;font-size:13.0px;line-height:16px;color:#000;white-space:nowrap;-webkit-text-stroke:0.25px #000}</style><div class="vl" style="left:840px;top:551px;height:509px;background:#4a4e5a"></div><div class="hl" style="left:840px;top:1058px;width:536px;height:2px;background:#676b77"></div><div class="a" style="left:841px;top:551px;width:54px;height:25px;background:#fff"></div><div class="vl" style="left:895px;top:551px;height:25px;background:#7a7a7a"></div><div class="a" style="left:895px;top:554px;width:78px;height:22px;border:1px solid #8c8c8c;border-bottom:none;background:linear-gradient(#f2f2f2,#e6e6e6 60%,#dcdcdc)"></div><div class="a" style="left:972px;top:554px;width:59px;height:22px;border:1px solid #8c8c8c;border-bottom:none;background:linear-gradient(#f2f2f2,#e6e6e6 60%,#dcdcdc)"></div><div class="a" style="left:1030px;top:554px;width:52px;height:22px;border:1px solid #8c8c8c;border-bottom:none;background:linear-gradient(#f2f2f2,#e6e6e6 60%,#dcdcdc)"></div><div class="a" style="left:1081px;top:554px;width:51px;height:22px;border:1px solid #8c8c8c;border-bottom:none;background:linear-gradient(#f2f2f2,#e6e6e6 60%,#dcdcdc)"></div><div class="hl" style="left:895px;top:575px;width:480px;background:#6d6d6d"></div><div class="a" style="left:845px;top:581px;width:530px;height:22px;background:linear-gradient(#fff,#f3f3f3 50%,#ececec);border-top:2px solid #222;border-left:2px solid #222;border-bottom:2px solid #222"></div><div class="vl" style="left:1062px;top:582px;height:21px;background:#333"></div><div class="vl" style="left:1249px;top:582px;height:21px;background:#333"></div><div class="vl" style="left:845px;top:603px;height:453px;width:2px;background:#a0a0a0"></div><div class="hl" style="left:845px;top:1055px;width:530px;height:2px;background:#a0a0a0"></div><div class="a" style="left:850px;top:609px;width:9px;height:9px;border:1px solid #919191;background:#fff"></div><div class="a" style="left:852px;top:613px;width:5px;height:1px;background:#000"></div><div class="a" style="left:860px;top:613px;width:4px;height:1px;background:repeating-linear-gradient(90deg,#a0a0a0 0 1px,transparent 1px 2px)"></div><div class="a" style="left:873px;top:622px;width:1px;height:287px;background:repeating-linear-gradient(#a0a0a0 0 1px,transparent 1px 2px)"></div><div class="a" style="left:868px;top:630px;width:9px;height:9px;border:1px solid #919191;background:#fff"></div><div class="a" style="left:870px;top:634px;width:5px;height:1px;background:#000"></div><div class="a" style="left:878px;top:634px;width:4px;height:1px;background:repeating-linear-gradient(90deg,#a0a0a0 0 1px,transparent 1px 2px)"></div><div class="a" style="left:892px;top:654px;width:8px;height:1px;background:repeating-linear-gradient(90deg,#a0a0a0 0 1px,transparent 1px 2px)"></div><div class="a" style="left:868px;top:671px;width:9px;height:9px;border:1px solid #919191;background:#fff"></div><div class="a" style="left:870px;top:675px;width:5px;height:1px;background:#000"></div><div class="a" style="left:878px;top:675px;width:4px;height:1px;background:repeating-linear-gradient(90deg,#a0a0a0 0 1px,transparent 1px 2px)"></div><div class="a" style="left:892px;top:748px;width:8px;height:1px;background:repeating-linear-gradient(90deg,#a0a0a0 0 1px,transparent 1px 2px)"></div><div class="a" style="left:868px;top:764px;width:9px;height:9px;border:1px solid #919191;background:#fff"></div><div class="a" style="left:870px;top:768px;width:5px;height:1px;background:#000"></div><div class="a" style="left:878px;top:768px;width:4px;height:1px;background:repeating-linear-gradient(90deg,#a0a0a0 0 1px,transparent 1px 2px)"></div><div class="a" style="left:868px;top:822px;width:9px;height:9px;border:1px solid #919191;background:#fff"></div><div class="a" style="left:870px;top:826px;width:5px;height:1px;background:#000"></div><div class="a" style="left:878px;top:826px;width:4px;height:1px;background:repeating-linear-gradient(90deg,#a0a0a0 0 1px,transparent 1px 2px)"></div><div class="a" style="left:892px;top:847px;width:8px;height:1px;background:repeating-linear-gradient(90deg,#a0a0a0 0 1px,transparent 1px 2px)"></div><div class="a" style="left:892px;top:867px;width:8px;height:1px;background:repeating-linear-gradient(90deg,#a0a0a0 0 1px,transparent 1px 2px)"></div><div class="a" style="left:892px;top:888px;width:8px;height:1px;background:repeating-linear-gradient(90deg,#a0a0a0 0 1px,transparent 1px 2px)"></div><div class="a" style="left:868px;top:904px;width:9px;height:9px;border:1px solid #919191;background:#fff"></div><div class="a" style="left:870px;top:908px;width:5px;height:1px;background:#000"></div><div class="a" style="left:872px;top:906px;width:1px;height:5px;background:#000"></div><div class="a" style="left:878px;top:908px;width:4px;height:1px;background:repeating-linear-gradient(90deg,#a0a0a0 0 1px,transparent 1px 2px)"></div><div class="a" style="left:891px;top:644px;width:1px;height:10px;background:repeating-linear-gradient(#a0a0a0 0 1px,transparent 1px 2px)"></div><div class="a" style="left:891px;top:685px;width:1px;height:64px;background:repeating-linear-gradient(#a0a0a0 0 1px,transparent 1px 2px)"></div><div class="a" style="left:892px;top:711px;width:8px;height:1px;background:repeating-linear-gradient(90deg,#a0a0a0 0 1px,transparent 1px 2px)"></div><div class="a" style="left:891px;top:778px;width:1px;height:20px;background:repeating-linear-gradient(#a0a0a0 0 1px,transparent 1px 2px)"></div><div class="a" style="left:892px;top:797px;width:8px;height:1px;background:repeating-linear-gradient(90deg,#a0a0a0 0 1px,transparent 1px 2px)"></div><div class="a" style="left:891px;top:836px;width:1px;height:53px;background:repeating-linear-gradient(#a0a0a0 0 1px,transparent 1px 2px)"></div><div id="tStatus" class="st" style="left:847.26px;top:555.00px;letter-spacing:0.126px">Status</div><div id="tArb" class="st" style="left:899.79px;top:557.00px;letter-spacing:-0.033px">ArbeitsListe</div><div id="tPip" class="st" style="left:978.26px;top:557.00px;letter-spacing:0.103px">PipListe</div><div id="tDel" class="st" style="left:1036.00px;top:557.00px;letter-spacing:-0.113px">Delay</div><div id="tLog" class="st" style="left:1087.26px;top:557.00px;letter-spacing:1.350px">Log</div><div id="hId" class="st" style="left:848.16px;top:584.30px;letter-spacing:0.042px">Identifizierer</div><div id="hEv" class="st" style="left:1065.00px;top:584.30px;letter-spacing:-0.077px">Ereignis</div><div id="hZp" class="st" style="left:1252.00px;top:584.30px;letter-spacing:0.427px">Zeitpunkt</div><div id="r1" class="st" style="left:884.00px;top:626.50px;letter-spacing:0.169px">Main Task</div><div id="r2" class="st" style="left:901.68px;top:647.00px;letter-spacing:0.180px">Status</div><div id="r3" class="st" style="left:884.00px;top:667.50px;letter-spacing:0.082px">Arbeitsliste</div><div id="r4" class="st" style="left:902.58px;top:688.30px;letter-spacing:0.051px">Aktueller Schritt</div><div id="r5" class="st" style="left:902.00px;top:740.70px;letter-spacing:0.009px">Dateiname Arbeitsliste</div><div id="r6" class="st" style="left:883.42px;top:761.00px;letter-spacing:0.120px">Roboterarm</div><div id="r7" class="st" style="left:902.00px;top:781.70px;letter-spacing:0.079px">Aktueller Zustand</div><div id="r8" class="st" style="left:883.42px;top:819.00px;letter-spacing:0.180px">Magnetrührer</div><div id="r9" class="st" style="left:902.00px;top:839.50px;letter-spacing:-0.257px">Rührer 96 Links</div><div id="r10" class="st" style="left:902.00px;top:860.10px;letter-spacing:-0.360px">Rührer 96 Rechts</div><div id="r11" class="st" style="left:902.00px;top:880.50px;letter-spacing:-0.338px">Rührer Reagenzien</div><div id="r12" class="st" style="left:883.42px;top:901.00px;letter-spacing:-0.018px">Spülen</div><div id="e1" class="st" style="left:1064.05px;top:647.10px;letter-spacing:-0.075px">StandBy</div><div id="e2a" class="st" style="left:1064.95px;top:688.50px;letter-spacing:0.048px">Vorhandene Arbeitsliste nicht</div><div id="e2b" class="st" style="left:1064.05px;top:704.20px;letter-spacing:0.078px">beendet (Fortfahren mit Schritt</div><div id="e2c" class="st" style="left:1064.05px;top:720.10px;letter-spacing:-0.064px">1 von 23</div><div id="e3" class="st" style="left:1064.05px;top:741.00px;letter-spacing:-0.365px">PN15048 v0.23 .xlsm</div><div id="e4a" class="st" style="left:1064.42px;top:781.70px;letter-spacing:0.051px">Steht (Initialisierung</div><div id="e4b" class="st" style="left:1064.42px;top:797.00px;letter-spacing:0.293px">durchgeführt)</div><div id="e5" class="st" style="left:1063.84px;top:839.50px;letter-spacing:0.840px">Stop</div><div id="e6" class="st" style="left:1064.26px;top:860.30px;letter-spacing:0.473px">Läuft</div><div id="e7" class="st" style="left:1064.26px;top:880.40px;letter-spacing:0.473px">Läuft</div><div id="z1" class="st" style="left:1250.84px;top:647.10px;letter-spacing:-0.605px">24.04.2018 09:15:54</div><div id="z2" class="st" style="left:1250.84px;top:688.50px;letter-spacing:-0.605px">24.04.2018 09:15:34</div><div id="z3" class="st" style="left:1250.84px;top:741.00px;letter-spacing:-0.605px">24.04.2018 09:15:34</div><div id="z4" class="st" style="left:1250.84px;top:781.70px;letter-spacing:-0.605px">24.04.2018 09:15:33</div><div id="z5" class="st" style="left:1250.84px;top:839.50px;letter-spacing:-0.605px">24.04.2018 09:15:35</div><div id="z6" class="st" style="left:1250.84px;top:860.10px;letter-spacing:-0.605px">24.04.2018 09:15:35</div><div id="z7" class="st" style="left:1250.84px;top:880.50px;letter-spacing:-0.605px">24.04.2018 09:15:35</div>


</body></html>
